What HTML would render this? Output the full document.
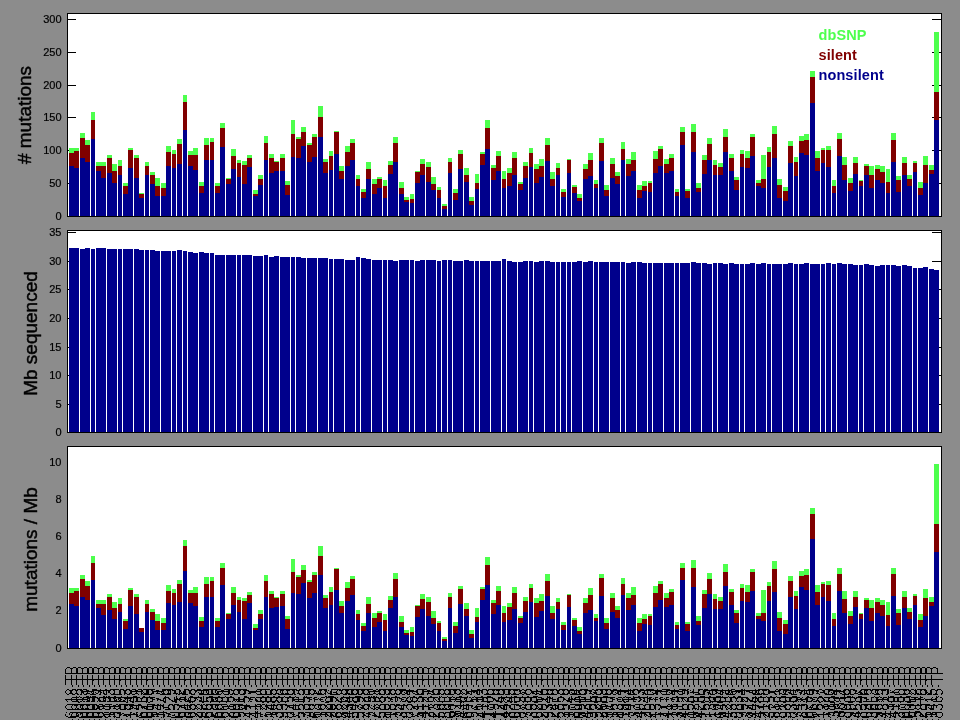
<!DOCTYPE html>
<html><head><meta charset="utf-8"><style>
html,body{margin:0;padding:0;background:#8c8c8c;width:960px;height:720px;overflow:hidden}
svg{display:block;will-change:transform}
.tk{font-family:"Liberation Sans",sans-serif;font-size:11px;fill:#000;stroke:#000;stroke-width:0.2px}
.yt{font-family:"Liberation Sans",sans-serif;font-size:19px;fill:#000;stroke:#000;stroke-width:0.45px}
.lg{font-family:"Liberation Sans",sans-serif;font-size:14.5px;font-weight:bold;letter-spacing:0.1px}
.xl{font-family:"Liberation Sans",sans-serif;font-size:16px;fill:#000}
</style></head><body>
<svg width="960" height="720" viewBox="0 0 960 720" shape-rendering="crispEdges">
<rect x="67" y="13" width="875" height="204" fill="#fff"/>
<rect x="67" y="230" width="875" height="203" fill="#fff"/>
<rect x="67" y="446" width="875" height="203" fill="#fff"/>
<rect x="67" y="19" width="9" height="1" fill="#000"/>
<rect x="932" y="19" width="9" height="1" fill="#000"/>
<rect x="67" y="52" width="9" height="1" fill="#000"/>
<rect x="932" y="52" width="9" height="1" fill="#000"/>
<rect x="67" y="85" width="9" height="1" fill="#000"/>
<rect x="932" y="85" width="9" height="1" fill="#000"/>
<rect x="67" y="117" width="9" height="1" fill="#000"/>
<rect x="932" y="117" width="9" height="1" fill="#000"/>
<rect x="67" y="150" width="9" height="1" fill="#000"/>
<rect x="932" y="150" width="9" height="1" fill="#000"/>
<rect x="67" y="183" width="9" height="1" fill="#000"/>
<rect x="932" y="183" width="9" height="1" fill="#000"/>
<rect x="67" y="216" width="9" height="1" fill="#000"/>
<rect x="932" y="216" width="9" height="1" fill="#000"/>
<rect x="67" y="232" width="9" height="1" fill="#000"/>
<rect x="932" y="232" width="9" height="1" fill="#000"/>
<rect x="67" y="261" width="9" height="1" fill="#000"/>
<rect x="932" y="261" width="9" height="1" fill="#000"/>
<rect x="67" y="289" width="9" height="1" fill="#000"/>
<rect x="932" y="289" width="9" height="1" fill="#000"/>
<rect x="67" y="318" width="9" height="1" fill="#000"/>
<rect x="932" y="318" width="9" height="1" fill="#000"/>
<rect x="67" y="347" width="9" height="1" fill="#000"/>
<rect x="932" y="347" width="9" height="1" fill="#000"/>
<rect x="67" y="375" width="9" height="1" fill="#000"/>
<rect x="932" y="375" width="9" height="1" fill="#000"/>
<rect x="67" y="404" width="9" height="1" fill="#000"/>
<rect x="932" y="404" width="9" height="1" fill="#000"/>
<rect x="67" y="432" width="9" height="1" fill="#000"/>
<rect x="932" y="432" width="9" height="1" fill="#000"/>
<rect x="69" y="148" width="5" height="5" fill="#4dff4d"/>
<rect x="69" y="153" width="5" height="13" fill="#800000"/>
<rect x="69" y="166" width="5" height="50" fill="#00008c"/>
<rect x="74" y="148" width="5" height="3" fill="#4dff4d"/>
<rect x="74" y="151" width="5" height="17" fill="#800000"/>
<rect x="74" y="168" width="5" height="48" fill="#00008c"/>
<rect x="80" y="133" width="5" height="5" fill="#4dff4d"/>
<rect x="80" y="138" width="5" height="20" fill="#800000"/>
<rect x="80" y="158" width="5" height="58" fill="#00008c"/>
<rect x="85" y="140" width="5" height="5" fill="#4dff4d"/>
<rect x="85" y="145" width="5" height="17" fill="#800000"/>
<rect x="85" y="162" width="5" height="54" fill="#00008c"/>
<rect x="91" y="112" width="4" height="8" fill="#4dff4d"/>
<rect x="91" y="120" width="4" height="19" fill="#800000"/>
<rect x="91" y="139" width="4" height="77" fill="#00008c"/>
<rect x="96" y="162" width="5" height="4" fill="#4dff4d"/>
<rect x="96" y="166" width="5" height="5" fill="#800000"/>
<rect x="96" y="171" width="5" height="45" fill="#00008c"/>
<rect x="101" y="162" width="5" height="4" fill="#4dff4d"/>
<rect x="101" y="166" width="5" height="12" fill="#800000"/>
<rect x="101" y="178" width="5" height="38" fill="#00008c"/>
<rect x="107" y="155" width="5" height="3" fill="#4dff4d"/>
<rect x="107" y="158" width="5" height="15" fill="#800000"/>
<rect x="107" y="173" width="5" height="43" fill="#00008c"/>
<rect x="112" y="164" width="5" height="7" fill="#4dff4d"/>
<rect x="112" y="171" width="5" height="12" fill="#800000"/>
<rect x="112" y="183" width="5" height="33" fill="#00008c"/>
<rect x="118" y="160" width="4" height="6" fill="#4dff4d"/>
<rect x="118" y="166" width="4" height="9" fill="#800000"/>
<rect x="118" y="175" width="4" height="41" fill="#00008c"/>
<rect x="123" y="183" width="5" height="3" fill="#4dff4d"/>
<rect x="123" y="186" width="5" height="8" fill="#800000"/>
<rect x="123" y="194" width="5" height="22" fill="#00008c"/>
<rect x="128" y="148" width="5" height="2" fill="#4dff4d"/>
<rect x="128" y="150" width="5" height="18" fill="#800000"/>
<rect x="128" y="168" width="5" height="48" fill="#00008c"/>
<rect x="134" y="155" width="5" height="3" fill="#4dff4d"/>
<rect x="134" y="158" width="5" height="20" fill="#800000"/>
<rect x="134" y="178" width="5" height="38" fill="#00008c"/>
<rect x="139" y="193" width="5" height="1" fill="#4dff4d"/>
<rect x="139" y="194" width="5" height="4" fill="#800000"/>
<rect x="139" y="198" width="5" height="18" fill="#00008c"/>
<rect x="145" y="162" width="4" height="4" fill="#4dff4d"/>
<rect x="145" y="166" width="4" height="9" fill="#800000"/>
<rect x="145" y="175" width="4" height="41" fill="#00008c"/>
<rect x="150" y="172" width="5" height="3" fill="#4dff4d"/>
<rect x="150" y="175" width="5" height="9" fill="#800000"/>
<rect x="150" y="184" width="5" height="32" fill="#00008c"/>
<rect x="155" y="178" width="5" height="8" fill="#4dff4d"/>
<rect x="155" y="186" width="5" height="10" fill="#800000"/>
<rect x="155" y="196" width="5" height="20" fill="#00008c"/>
<rect x="161" y="183" width="5" height="5" fill="#4dff4d"/>
<rect x="161" y="188" width="5" height="8" fill="#800000"/>
<rect x="161" y="196" width="5" height="20" fill="#00008c"/>
<rect x="166" y="146" width="5" height="6" fill="#4dff4d"/>
<rect x="166" y="152" width="5" height="14" fill="#800000"/>
<rect x="166" y="166" width="5" height="50" fill="#00008c"/>
<rect x="172" y="150" width="4" height="4" fill="#4dff4d"/>
<rect x="172" y="154" width="4" height="14" fill="#800000"/>
<rect x="172" y="168" width="4" height="48" fill="#00008c"/>
<rect x="177" y="139" width="5" height="5" fill="#4dff4d"/>
<rect x="177" y="144" width="5" height="20" fill="#800000"/>
<rect x="177" y="164" width="5" height="52" fill="#00008c"/>
<rect x="183" y="95" width="4" height="7" fill="#4dff4d"/>
<rect x="183" y="102" width="4" height="28" fill="#800000"/>
<rect x="183" y="130" width="4" height="86" fill="#00008c"/>
<rect x="188" y="151" width="5" height="4" fill="#4dff4d"/>
<rect x="188" y="155" width="5" height="11" fill="#800000"/>
<rect x="188" y="166" width="5" height="50" fill="#00008c"/>
<rect x="193" y="148" width="5" height="7" fill="#4dff4d"/>
<rect x="193" y="155" width="5" height="15" fill="#800000"/>
<rect x="193" y="170" width="5" height="46" fill="#00008c"/>
<rect x="199" y="182" width="5" height="4" fill="#4dff4d"/>
<rect x="199" y="186" width="5" height="7" fill="#800000"/>
<rect x="199" y="193" width="5" height="23" fill="#00008c"/>
<rect x="204" y="138" width="5" height="7" fill="#4dff4d"/>
<rect x="204" y="145" width="5" height="15" fill="#800000"/>
<rect x="204" y="160" width="5" height="56" fill="#00008c"/>
<rect x="210" y="138" width="4" height="4" fill="#4dff4d"/>
<rect x="210" y="142" width="4" height="18" fill="#800000"/>
<rect x="210" y="160" width="4" height="56" fill="#00008c"/>
<rect x="215" y="183" width="5" height="3" fill="#4dff4d"/>
<rect x="215" y="186" width="5" height="7" fill="#800000"/>
<rect x="215" y="193" width="5" height="23" fill="#00008c"/>
<rect x="220" y="123" width="5" height="5" fill="#4dff4d"/>
<rect x="220" y="128" width="5" height="19" fill="#800000"/>
<rect x="220" y="147" width="5" height="69" fill="#00008c"/>
<rect x="226" y="178" width="5" height="1" fill="#4dff4d"/>
<rect x="226" y="179" width="5" height="5" fill="#800000"/>
<rect x="226" y="184" width="5" height="32" fill="#00008c"/>
<rect x="231" y="149" width="5" height="7" fill="#4dff4d"/>
<rect x="231" y="156" width="5" height="13" fill="#800000"/>
<rect x="231" y="169" width="5" height="47" fill="#00008c"/>
<rect x="237" y="160" width="4" height="3" fill="#4dff4d"/>
<rect x="237" y="163" width="4" height="14" fill="#800000"/>
<rect x="237" y="177" width="4" height="39" fill="#00008c"/>
<rect x="242" y="161" width="5" height="4" fill="#4dff4d"/>
<rect x="242" y="165" width="5" height="19" fill="#800000"/>
<rect x="242" y="184" width="5" height="32" fill="#00008c"/>
<rect x="247" y="155" width="5" height="3" fill="#4dff4d"/>
<rect x="247" y="158" width="5" height="9" fill="#800000"/>
<rect x="247" y="167" width="5" height="49" fill="#00008c"/>
<rect x="253" y="190" width="5" height="4" fill="#4dff4d"/>
<rect x="253" y="194" width="5" height="2" fill="#800000"/>
<rect x="253" y="196" width="5" height="20" fill="#00008c"/>
<rect x="258" y="175" width="5" height="4" fill="#4dff4d"/>
<rect x="258" y="179" width="5" height="6" fill="#800000"/>
<rect x="258" y="185" width="5" height="31" fill="#00008c"/>
<rect x="264" y="136" width="4" height="7" fill="#4dff4d"/>
<rect x="264" y="143" width="4" height="17" fill="#800000"/>
<rect x="264" y="160" width="4" height="56" fill="#00008c"/>
<rect x="269" y="154" width="5" height="4" fill="#4dff4d"/>
<rect x="269" y="158" width="5" height="15" fill="#800000"/>
<rect x="269" y="173" width="5" height="43" fill="#00008c"/>
<rect x="274" y="161" width="5" height="1" fill="#4dff4d"/>
<rect x="274" y="162" width="5" height="9" fill="#800000"/>
<rect x="274" y="171" width="5" height="45" fill="#00008c"/>
<rect x="280" y="154" width="5" height="4" fill="#4dff4d"/>
<rect x="280" y="158" width="5" height="13" fill="#800000"/>
<rect x="280" y="171" width="5" height="45" fill="#00008c"/>
<rect x="285" y="181" width="5" height="4" fill="#4dff4d"/>
<rect x="285" y="185" width="5" height="10" fill="#800000"/>
<rect x="285" y="195" width="5" height="21" fill="#00008c"/>
<rect x="291" y="120" width="4" height="14" fill="#4dff4d"/>
<rect x="291" y="134" width="4" height="23" fill="#800000"/>
<rect x="291" y="157" width="4" height="59" fill="#00008c"/>
<rect x="296" y="137" width="5" height="2" fill="#4dff4d"/>
<rect x="296" y="139" width="5" height="19" fill="#800000"/>
<rect x="296" y="158" width="5" height="58" fill="#00008c"/>
<rect x="301" y="127" width="5" height="5" fill="#4dff4d"/>
<rect x="301" y="132" width="5" height="14" fill="#800000"/>
<rect x="301" y="146" width="5" height="70" fill="#00008c"/>
<rect x="307" y="143" width="5" height="2" fill="#4dff4d"/>
<rect x="307" y="145" width="5" height="17" fill="#800000"/>
<rect x="307" y="162" width="5" height="54" fill="#00008c"/>
<rect x="312" y="134" width="5" height="3" fill="#4dff4d"/>
<rect x="312" y="137" width="5" height="20" fill="#800000"/>
<rect x="312" y="157" width="5" height="59" fill="#00008c"/>
<rect x="318" y="106" width="5" height="11" fill="#4dff4d"/>
<rect x="318" y="117" width="5" height="20" fill="#800000"/>
<rect x="318" y="137" width="5" height="79" fill="#00008c"/>
<rect x="323" y="159" width="5" height="3" fill="#4dff4d"/>
<rect x="323" y="162" width="5" height="11" fill="#800000"/>
<rect x="323" y="173" width="5" height="43" fill="#00008c"/>
<rect x="329" y="151" width="4" height="5" fill="#4dff4d"/>
<rect x="329" y="156" width="4" height="14" fill="#800000"/>
<rect x="329" y="170" width="4" height="46" fill="#00008c"/>
<rect x="334" y="131" width="5" height="1" fill="#4dff4d"/>
<rect x="334" y="132" width="5" height="22" fill="#800000"/>
<rect x="334" y="154" width="5" height="62" fill="#00008c"/>
<rect x="339" y="166" width="5" height="5" fill="#4dff4d"/>
<rect x="339" y="171" width="5" height="8" fill="#800000"/>
<rect x="339" y="179" width="5" height="37" fill="#00008c"/>
<rect x="345" y="146" width="5" height="6" fill="#4dff4d"/>
<rect x="345" y="152" width="5" height="14" fill="#800000"/>
<rect x="345" y="166" width="5" height="50" fill="#00008c"/>
<rect x="350" y="139" width="5" height="4" fill="#4dff4d"/>
<rect x="350" y="143" width="5" height="17" fill="#800000"/>
<rect x="350" y="160" width="5" height="56" fill="#00008c"/>
<rect x="356" y="175" width="4" height="4" fill="#4dff4d"/>
<rect x="356" y="179" width="4" height="7" fill="#800000"/>
<rect x="356" y="186" width="4" height="30" fill="#00008c"/>
<rect x="361" y="189" width="5" height="3" fill="#4dff4d"/>
<rect x="361" y="192" width="5" height="6" fill="#800000"/>
<rect x="361" y="198" width="5" height="18" fill="#00008c"/>
<rect x="366" y="162" width="5" height="7" fill="#4dff4d"/>
<rect x="366" y="169" width="5" height="10" fill="#800000"/>
<rect x="366" y="179" width="5" height="37" fill="#00008c"/>
<rect x="372" y="179" width="5" height="5" fill="#4dff4d"/>
<rect x="372" y="184" width="5" height="10" fill="#800000"/>
<rect x="372" y="194" width="5" height="22" fill="#00008c"/>
<rect x="377" y="177" width="5" height="2" fill="#4dff4d"/>
<rect x="377" y="179" width="5" height="9" fill="#800000"/>
<rect x="377" y="188" width="5" height="28" fill="#00008c"/>
<rect x="383" y="180" width="4" height="6" fill="#4dff4d"/>
<rect x="383" y="186" width="4" height="12" fill="#800000"/>
<rect x="383" y="198" width="4" height="18" fill="#00008c"/>
<rect x="388" y="161" width="5" height="4" fill="#4dff4d"/>
<rect x="388" y="165" width="5" height="9" fill="#800000"/>
<rect x="388" y="174" width="5" height="42" fill="#00008c"/>
<rect x="393" y="137" width="5" height="6" fill="#4dff4d"/>
<rect x="393" y="143" width="5" height="19" fill="#800000"/>
<rect x="393" y="162" width="5" height="54" fill="#00008c"/>
<rect x="399" y="182" width="5" height="6" fill="#4dff4d"/>
<rect x="399" y="188" width="5" height="6" fill="#800000"/>
<rect x="399" y="194" width="5" height="22" fill="#00008c"/>
<rect x="404" y="197" width="5" height="3" fill="#4dff4d"/>
<rect x="404" y="200" width="5" height="2" fill="#800000"/>
<rect x="404" y="202" width="5" height="14" fill="#00008c"/>
<rect x="410" y="194" width="4" height="5" fill="#4dff4d"/>
<rect x="410" y="199" width="4" height="4" fill="#800000"/>
<rect x="410" y="203" width="4" height="13" fill="#00008c"/>
<rect x="415" y="171" width="5" height="1" fill="#4dff4d"/>
<rect x="415" y="172" width="5" height="11" fill="#800000"/>
<rect x="415" y="183" width="5" height="33" fill="#00008c"/>
<rect x="420" y="159" width="5" height="5" fill="#4dff4d"/>
<rect x="420" y="164" width="5" height="11" fill="#800000"/>
<rect x="420" y="175" width="5" height="41" fill="#00008c"/>
<rect x="426" y="162" width="5" height="5" fill="#4dff4d"/>
<rect x="426" y="167" width="5" height="15" fill="#800000"/>
<rect x="426" y="182" width="5" height="34" fill="#00008c"/>
<rect x="431" y="177" width="5" height="7" fill="#4dff4d"/>
<rect x="431" y="184" width="5" height="6" fill="#800000"/>
<rect x="431" y="190" width="5" height="26" fill="#00008c"/>
<rect x="437" y="187" width="4" height="3" fill="#4dff4d"/>
<rect x="437" y="190" width="4" height="8" fill="#800000"/>
<rect x="437" y="198" width="4" height="18" fill="#00008c"/>
<rect x="442" y="204" width="5" height="2" fill="#4dff4d"/>
<rect x="442" y="206" width="5" height="3" fill="#800000"/>
<rect x="442" y="209" width="5" height="7" fill="#00008c"/>
<rect x="448" y="158" width="4" height="4" fill="#4dff4d"/>
<rect x="448" y="162" width="4" height="11" fill="#800000"/>
<rect x="448" y="173" width="4" height="43" fill="#00008c"/>
<rect x="453" y="189" width="5" height="4" fill="#4dff4d"/>
<rect x="453" y="193" width="5" height="7" fill="#800000"/>
<rect x="453" y="200" width="5" height="16" fill="#00008c"/>
<rect x="458" y="150" width="5" height="4" fill="#4dff4d"/>
<rect x="458" y="154" width="5" height="15" fill="#800000"/>
<rect x="458" y="169" width="5" height="47" fill="#00008c"/>
<rect x="464" y="168" width="5" height="7" fill="#4dff4d"/>
<rect x="464" y="175" width="5" height="7" fill="#800000"/>
<rect x="464" y="182" width="5" height="34" fill="#00008c"/>
<rect x="469" y="197" width="5" height="4" fill="#4dff4d"/>
<rect x="469" y="201" width="5" height="4" fill="#800000"/>
<rect x="469" y="205" width="5" height="11" fill="#00008c"/>
<rect x="475" y="174" width="4" height="9" fill="#4dff4d"/>
<rect x="475" y="183" width="4" height="6" fill="#800000"/>
<rect x="475" y="189" width="4" height="27" fill="#00008c"/>
<rect x="480" y="152" width="5" height="2" fill="#4dff4d"/>
<rect x="480" y="154" width="5" height="11" fill="#800000"/>
<rect x="480" y="165" width="5" height="51" fill="#00008c"/>
<rect x="485" y="120" width="5" height="8" fill="#4dff4d"/>
<rect x="485" y="128" width="5" height="21" fill="#800000"/>
<rect x="485" y="149" width="5" height="67" fill="#00008c"/>
<rect x="491" y="165" width="5" height="3" fill="#4dff4d"/>
<rect x="491" y="168" width="5" height="12" fill="#800000"/>
<rect x="491" y="180" width="5" height="36" fill="#00008c"/>
<rect x="496" y="151" width="5" height="5" fill="#4dff4d"/>
<rect x="496" y="156" width="5" height="15" fill="#800000"/>
<rect x="496" y="171" width="5" height="45" fill="#00008c"/>
<rect x="502" y="171" width="4" height="8" fill="#4dff4d"/>
<rect x="502" y="179" width="4" height="9" fill="#800000"/>
<rect x="502" y="188" width="4" height="28" fill="#00008c"/>
<rect x="507" y="168" width="5" height="5" fill="#4dff4d"/>
<rect x="507" y="173" width="5" height="13" fill="#800000"/>
<rect x="507" y="186" width="5" height="30" fill="#00008c"/>
<rect x="512" y="152" width="5" height="6" fill="#4dff4d"/>
<rect x="512" y="158" width="5" height="17" fill="#800000"/>
<rect x="512" y="175" width="5" height="41" fill="#00008c"/>
<rect x="518" y="182" width="5" height="2" fill="#4dff4d"/>
<rect x="518" y="184" width="5" height="6" fill="#800000"/>
<rect x="518" y="190" width="5" height="26" fill="#00008c"/>
<rect x="523" y="162" width="5" height="4" fill="#4dff4d"/>
<rect x="523" y="166" width="5" height="12" fill="#800000"/>
<rect x="523" y="178" width="5" height="38" fill="#00008c"/>
<rect x="529" y="148" width="4" height="5" fill="#4dff4d"/>
<rect x="529" y="153" width="4" height="14" fill="#800000"/>
<rect x="529" y="167" width="4" height="49" fill="#00008c"/>
<rect x="534" y="164" width="5" height="5" fill="#4dff4d"/>
<rect x="534" y="169" width="5" height="14" fill="#800000"/>
<rect x="534" y="183" width="5" height="33" fill="#00008c"/>
<rect x="539" y="159" width="5" height="7" fill="#4dff4d"/>
<rect x="539" y="166" width="5" height="11" fill="#800000"/>
<rect x="539" y="177" width="5" height="39" fill="#00008c"/>
<rect x="545" y="138" width="5" height="7" fill="#4dff4d"/>
<rect x="545" y="145" width="5" height="16" fill="#800000"/>
<rect x="545" y="161" width="5" height="55" fill="#00008c"/>
<rect x="550" y="172" width="5" height="7" fill="#4dff4d"/>
<rect x="550" y="179" width="5" height="7" fill="#800000"/>
<rect x="550" y="186" width="5" height="30" fill="#00008c"/>
<rect x="556" y="163" width="4" height="5" fill="#4dff4d"/>
<rect x="556" y="168" width="4" height="7" fill="#800000"/>
<rect x="556" y="175" width="4" height="41" fill="#00008c"/>
<rect x="561" y="189" width="5" height="3" fill="#4dff4d"/>
<rect x="561" y="192" width="5" height="5" fill="#800000"/>
<rect x="561" y="197" width="5" height="19" fill="#00008c"/>
<rect x="567" y="159" width="4" height="1" fill="#4dff4d"/>
<rect x="567" y="160" width="4" height="13" fill="#800000"/>
<rect x="567" y="173" width="4" height="43" fill="#00008c"/>
<rect x="572" y="185" width="5" height="2" fill="#4dff4d"/>
<rect x="572" y="187" width="5" height="6" fill="#800000"/>
<rect x="572" y="193" width="5" height="23" fill="#00008c"/>
<rect x="577" y="194" width="5" height="4" fill="#4dff4d"/>
<rect x="577" y="198" width="5" height="3" fill="#800000"/>
<rect x="577" y="201" width="5" height="15" fill="#00008c"/>
<rect x="583" y="164" width="5" height="5" fill="#4dff4d"/>
<rect x="583" y="169" width="5" height="10" fill="#800000"/>
<rect x="583" y="179" width="5" height="37" fill="#00008c"/>
<rect x="588" y="153" width="5" height="7" fill="#4dff4d"/>
<rect x="588" y="160" width="5" height="16" fill="#800000"/>
<rect x="588" y="176" width="5" height="40" fill="#00008c"/>
<rect x="594" y="180" width="4" height="4" fill="#4dff4d"/>
<rect x="594" y="184" width="4" height="4" fill="#800000"/>
<rect x="594" y="188" width="4" height="28" fill="#00008c"/>
<rect x="599" y="138" width="5" height="5" fill="#4dff4d"/>
<rect x="599" y="143" width="5" height="18" fill="#800000"/>
<rect x="599" y="161" width="5" height="55" fill="#00008c"/>
<rect x="604" y="185" width="5" height="5" fill="#4dff4d"/>
<rect x="604" y="190" width="5" height="6" fill="#800000"/>
<rect x="604" y="196" width="5" height="20" fill="#00008c"/>
<rect x="610" y="158" width="5" height="6" fill="#4dff4d"/>
<rect x="610" y="164" width="5" height="14" fill="#800000"/>
<rect x="610" y="178" width="5" height="38" fill="#00008c"/>
<rect x="615" y="172" width="5" height="4" fill="#4dff4d"/>
<rect x="615" y="176" width="5" height="8" fill="#800000"/>
<rect x="615" y="184" width="5" height="32" fill="#00008c"/>
<rect x="621" y="142" width="4" height="7" fill="#4dff4d"/>
<rect x="621" y="149" width="4" height="11" fill="#800000"/>
<rect x="621" y="160" width="4" height="56" fill="#00008c"/>
<rect x="626" y="159" width="5" height="5" fill="#4dff4d"/>
<rect x="626" y="164" width="5" height="12" fill="#800000"/>
<rect x="626" y="176" width="5" height="40" fill="#00008c"/>
<rect x="631" y="152" width="5" height="8" fill="#4dff4d"/>
<rect x="631" y="160" width="5" height="11" fill="#800000"/>
<rect x="631" y="171" width="5" height="45" fill="#00008c"/>
<rect x="637" y="185" width="5" height="5" fill="#4dff4d"/>
<rect x="637" y="190" width="5" height="8" fill="#800000"/>
<rect x="637" y="198" width="5" height="18" fill="#00008c"/>
<rect x="642" y="181" width="5" height="5" fill="#4dff4d"/>
<rect x="642" y="186" width="5" height="5" fill="#800000"/>
<rect x="642" y="191" width="5" height="25" fill="#00008c"/>
<rect x="648" y="181" width="4" height="2" fill="#4dff4d"/>
<rect x="648" y="183" width="4" height="9" fill="#800000"/>
<rect x="648" y="192" width="4" height="24" fill="#00008c"/>
<rect x="653" y="151" width="5" height="8" fill="#4dff4d"/>
<rect x="653" y="159" width="5" height="14" fill="#800000"/>
<rect x="653" y="173" width="5" height="43" fill="#00008c"/>
<rect x="658" y="146" width="5" height="3" fill="#4dff4d"/>
<rect x="658" y="149" width="5" height="17" fill="#800000"/>
<rect x="658" y="166" width="5" height="50" fill="#00008c"/>
<rect x="664" y="159" width="5" height="5" fill="#4dff4d"/>
<rect x="664" y="164" width="5" height="9" fill="#800000"/>
<rect x="664" y="173" width="5" height="43" fill="#00008c"/>
<rect x="669" y="154" width="5" height="4" fill="#4dff4d"/>
<rect x="669" y="158" width="5" height="13" fill="#800000"/>
<rect x="669" y="171" width="5" height="45" fill="#00008c"/>
<rect x="675" y="189" width="4" height="3" fill="#4dff4d"/>
<rect x="675" y="192" width="4" height="4" fill="#800000"/>
<rect x="675" y="196" width="4" height="20" fill="#00008c"/>
<rect x="680" y="127" width="5" height="5" fill="#4dff4d"/>
<rect x="680" y="132" width="5" height="13" fill="#800000"/>
<rect x="680" y="145" width="5" height="71" fill="#00008c"/>
<rect x="685" y="189" width="5" height="2" fill="#4dff4d"/>
<rect x="685" y="191" width="5" height="7" fill="#800000"/>
<rect x="685" y="198" width="5" height="18" fill="#00008c"/>
<rect x="691" y="124" width="5" height="8" fill="#4dff4d"/>
<rect x="691" y="132" width="5" height="20" fill="#800000"/>
<rect x="691" y="152" width="5" height="64" fill="#00008c"/>
<rect x="696" y="183" width="5" height="5" fill="#4dff4d"/>
<rect x="696" y="188" width="5" height="4" fill="#800000"/>
<rect x="696" y="192" width="5" height="24" fill="#00008c"/>
<rect x="702" y="155" width="5" height="5" fill="#4dff4d"/>
<rect x="702" y="160" width="5" height="14" fill="#800000"/>
<rect x="702" y="174" width="5" height="42" fill="#00008c"/>
<rect x="707" y="138" width="5" height="6" fill="#4dff4d"/>
<rect x="707" y="144" width="5" height="16" fill="#800000"/>
<rect x="707" y="160" width="5" height="56" fill="#00008c"/>
<rect x="713" y="160" width="4" height="5" fill="#4dff4d"/>
<rect x="713" y="165" width="4" height="10" fill="#800000"/>
<rect x="713" y="175" width="4" height="41" fill="#00008c"/>
<rect x="718" y="163" width="5" height="4" fill="#4dff4d"/>
<rect x="718" y="167" width="5" height="8" fill="#800000"/>
<rect x="718" y="175" width="5" height="41" fill="#00008c"/>
<rect x="723" y="129" width="5" height="8" fill="#4dff4d"/>
<rect x="723" y="137" width="5" height="15" fill="#800000"/>
<rect x="723" y="152" width="5" height="64" fill="#00008c"/>
<rect x="729" y="154" width="5" height="4" fill="#4dff4d"/>
<rect x="729" y="158" width="5" height="13" fill="#800000"/>
<rect x="729" y="171" width="5" height="45" fill="#00008c"/>
<rect x="734" y="177" width="5" height="3" fill="#4dff4d"/>
<rect x="734" y="180" width="5" height="10" fill="#800000"/>
<rect x="734" y="190" width="5" height="26" fill="#00008c"/>
<rect x="740" y="150" width="4" height="4" fill="#4dff4d"/>
<rect x="740" y="154" width="4" height="13" fill="#800000"/>
<rect x="740" y="167" width="4" height="49" fill="#00008c"/>
<rect x="745" y="151" width="5" height="7" fill="#4dff4d"/>
<rect x="745" y="158" width="5" height="10" fill="#800000"/>
<rect x="745" y="168" width="5" height="48" fill="#00008c"/>
<rect x="750" y="134" width="5" height="3" fill="#4dff4d"/>
<rect x="750" y="137" width="5" height="19" fill="#800000"/>
<rect x="750" y="156" width="5" height="60" fill="#00008c"/>
<rect x="756" y="180" width="5" height="3" fill="#4dff4d"/>
<rect x="756" y="183" width="5" height="3" fill="#800000"/>
<rect x="756" y="186" width="5" height="30" fill="#00008c"/>
<rect x="761" y="155" width="5" height="24" fill="#4dff4d"/>
<rect x="761" y="179" width="5" height="9" fill="#800000"/>
<rect x="761" y="188" width="5" height="28" fill="#00008c"/>
<rect x="767" y="147" width="4" height="5" fill="#4dff4d"/>
<rect x="767" y="152" width="4" height="15" fill="#800000"/>
<rect x="767" y="167" width="4" height="49" fill="#00008c"/>
<rect x="772" y="126" width="5" height="8" fill="#4dff4d"/>
<rect x="772" y="134" width="5" height="24" fill="#800000"/>
<rect x="772" y="158" width="5" height="58" fill="#00008c"/>
<rect x="777" y="179" width="5" height="6" fill="#4dff4d"/>
<rect x="777" y="185" width="5" height="13" fill="#800000"/>
<rect x="777" y="198" width="5" height="18" fill="#00008c"/>
<rect x="783" y="187" width="5" height="4" fill="#4dff4d"/>
<rect x="783" y="191" width="5" height="10" fill="#800000"/>
<rect x="783" y="201" width="5" height="15" fill="#00008c"/>
<rect x="788" y="141" width="5" height="5" fill="#4dff4d"/>
<rect x="788" y="146" width="5" height="17" fill="#800000"/>
<rect x="788" y="163" width="5" height="53" fill="#00008c"/>
<rect x="794" y="157" width="4" height="5" fill="#4dff4d"/>
<rect x="794" y="162" width="4" height="14" fill="#800000"/>
<rect x="794" y="176" width="4" height="40" fill="#00008c"/>
<rect x="799" y="136" width="5" height="5" fill="#4dff4d"/>
<rect x="799" y="141" width="5" height="12" fill="#800000"/>
<rect x="799" y="153" width="5" height="63" fill="#00008c"/>
<rect x="804" y="134" width="5" height="6" fill="#4dff4d"/>
<rect x="804" y="140" width="5" height="15" fill="#800000"/>
<rect x="804" y="155" width="5" height="61" fill="#00008c"/>
<rect x="810" y="71" width="5" height="6" fill="#4dff4d"/>
<rect x="810" y="77" width="5" height="26" fill="#800000"/>
<rect x="810" y="103" width="5" height="113" fill="#00008c"/>
<rect x="815" y="151" width="5" height="7" fill="#4dff4d"/>
<rect x="815" y="158" width="5" height="13" fill="#800000"/>
<rect x="815" y="171" width="5" height="45" fill="#00008c"/>
<rect x="821" y="148" width="4" height="2" fill="#4dff4d"/>
<rect x="821" y="150" width="4" height="13" fill="#800000"/>
<rect x="821" y="163" width="4" height="53" fill="#00008c"/>
<rect x="826" y="146" width="5" height="4" fill="#4dff4d"/>
<rect x="826" y="150" width="5" height="17" fill="#800000"/>
<rect x="826" y="167" width="5" height="49" fill="#00008c"/>
<rect x="832" y="180" width="4" height="6" fill="#4dff4d"/>
<rect x="832" y="186" width="4" height="7" fill="#800000"/>
<rect x="832" y="193" width="4" height="23" fill="#00008c"/>
<rect x="837" y="133" width="5" height="6" fill="#4dff4d"/>
<rect x="837" y="139" width="5" height="17" fill="#800000"/>
<rect x="837" y="156" width="5" height="60" fill="#00008c"/>
<rect x="842" y="157" width="5" height="8" fill="#4dff4d"/>
<rect x="842" y="165" width="5" height="15" fill="#800000"/>
<rect x="842" y="180" width="5" height="36" fill="#00008c"/>
<rect x="848" y="178" width="5" height="5" fill="#4dff4d"/>
<rect x="848" y="183" width="5" height="8" fill="#800000"/>
<rect x="848" y="191" width="5" height="25" fill="#00008c"/>
<rect x="853" y="157" width="5" height="6" fill="#4dff4d"/>
<rect x="853" y="163" width="5" height="11" fill="#800000"/>
<rect x="853" y="174" width="5" height="42" fill="#00008c"/>
<rect x="859" y="180" width="4" height="1" fill="#4dff4d"/>
<rect x="859" y="181" width="4" height="5" fill="#800000"/>
<rect x="859" y="186" width="4" height="30" fill="#00008c"/>
<rect x="864" y="164" width="5" height="2" fill="#4dff4d"/>
<rect x="864" y="166" width="5" height="9" fill="#800000"/>
<rect x="864" y="175" width="5" height="41" fill="#00008c"/>
<rect x="869" y="166" width="5" height="9" fill="#4dff4d"/>
<rect x="869" y="175" width="5" height="13" fill="#800000"/>
<rect x="869" y="188" width="5" height="28" fill="#00008c"/>
<rect x="875" y="165" width="5" height="4" fill="#4dff4d"/>
<rect x="875" y="169" width="5" height="11" fill="#800000"/>
<rect x="875" y="180" width="5" height="36" fill="#00008c"/>
<rect x="880" y="166" width="5" height="6" fill="#4dff4d"/>
<rect x="880" y="172" width="5" height="11" fill="#800000"/>
<rect x="880" y="183" width="5" height="33" fill="#00008c"/>
<rect x="886" y="169" width="4" height="13" fill="#4dff4d"/>
<rect x="886" y="182" width="4" height="11" fill="#800000"/>
<rect x="886" y="193" width="4" height="23" fill="#00008c"/>
<rect x="891" y="133" width="5" height="7" fill="#4dff4d"/>
<rect x="891" y="140" width="5" height="22" fill="#800000"/>
<rect x="891" y="162" width="5" height="54" fill="#00008c"/>
<rect x="896" y="176" width="5" height="4" fill="#4dff4d"/>
<rect x="896" y="180" width="5" height="12" fill="#800000"/>
<rect x="896" y="192" width="5" height="24" fill="#00008c"/>
<rect x="902" y="157" width="5" height="6" fill="#4dff4d"/>
<rect x="902" y="163" width="5" height="12" fill="#800000"/>
<rect x="902" y="175" width="5" height="41" fill="#00008c"/>
<rect x="907" y="175" width="5" height="4" fill="#4dff4d"/>
<rect x="907" y="179" width="5" height="7" fill="#800000"/>
<rect x="907" y="186" width="5" height="30" fill="#00008c"/>
<rect x="913" y="161" width="4" height="2" fill="#4dff4d"/>
<rect x="913" y="163" width="4" height="9" fill="#800000"/>
<rect x="913" y="172" width="4" height="44" fill="#00008c"/>
<rect x="918" y="182" width="5" height="6" fill="#4dff4d"/>
<rect x="918" y="188" width="5" height="7" fill="#800000"/>
<rect x="918" y="195" width="5" height="21" fill="#00008c"/>
<rect x="923" y="156" width="5" height="9" fill="#4dff4d"/>
<rect x="923" y="165" width="5" height="18" fill="#800000"/>
<rect x="923" y="183" width="5" height="33" fill="#00008c"/>
<rect x="929" y="165" width="5" height="5" fill="#4dff4d"/>
<rect x="929" y="170" width="5" height="4" fill="#800000"/>
<rect x="929" y="174" width="5" height="42" fill="#00008c"/>
<rect x="934" y="32" width="5" height="60" fill="#4dff4d"/>
<rect x="934" y="92" width="5" height="28" fill="#800000"/>
<rect x="934" y="120" width="5" height="96" fill="#00008c"/>
<rect x="69" y="248" width="5" height="184" fill="#00008c"/>
<rect x="74" y="248" width="5" height="184" fill="#00008c"/>
<rect x="80" y="249" width="5" height="183" fill="#00008c"/>
<rect x="85" y="248" width="5" height="184" fill="#00008c"/>
<rect x="91" y="249" width="4" height="183" fill="#00008c"/>
<rect x="96" y="248" width="5" height="184" fill="#00008c"/>
<rect x="101" y="248" width="5" height="184" fill="#00008c"/>
<rect x="107" y="249" width="5" height="183" fill="#00008c"/>
<rect x="112" y="249" width="5" height="183" fill="#00008c"/>
<rect x="118" y="249" width="4" height="183" fill="#00008c"/>
<rect x="123" y="249" width="5" height="183" fill="#00008c"/>
<rect x="128" y="249" width="5" height="183" fill="#00008c"/>
<rect x="134" y="249" width="5" height="183" fill="#00008c"/>
<rect x="139" y="250" width="5" height="182" fill="#00008c"/>
<rect x="145" y="250" width="4" height="182" fill="#00008c"/>
<rect x="150" y="250" width="5" height="182" fill="#00008c"/>
<rect x="155" y="251" width="5" height="181" fill="#00008c"/>
<rect x="161" y="251" width="5" height="181" fill="#00008c"/>
<rect x="166" y="251" width="5" height="181" fill="#00008c"/>
<rect x="172" y="251" width="4" height="181" fill="#00008c"/>
<rect x="177" y="250" width="5" height="182" fill="#00008c"/>
<rect x="183" y="251" width="4" height="181" fill="#00008c"/>
<rect x="188" y="252" width="5" height="180" fill="#00008c"/>
<rect x="193" y="253" width="5" height="179" fill="#00008c"/>
<rect x="199" y="252" width="5" height="180" fill="#00008c"/>
<rect x="204" y="253" width="5" height="179" fill="#00008c"/>
<rect x="210" y="253" width="4" height="179" fill="#00008c"/>
<rect x="215" y="255" width="5" height="177" fill="#00008c"/>
<rect x="220" y="255" width="5" height="177" fill="#00008c"/>
<rect x="226" y="255" width="5" height="177" fill="#00008c"/>
<rect x="231" y="255" width="5" height="177" fill="#00008c"/>
<rect x="237" y="255" width="4" height="177" fill="#00008c"/>
<rect x="242" y="255" width="5" height="177" fill="#00008c"/>
<rect x="247" y="255" width="5" height="177" fill="#00008c"/>
<rect x="253" y="256" width="5" height="176" fill="#00008c"/>
<rect x="258" y="256" width="5" height="176" fill="#00008c"/>
<rect x="264" y="255" width="4" height="177" fill="#00008c"/>
<rect x="269" y="257" width="5" height="175" fill="#00008c"/>
<rect x="274" y="256" width="5" height="176" fill="#00008c"/>
<rect x="280" y="257" width="5" height="175" fill="#00008c"/>
<rect x="285" y="257" width="5" height="175" fill="#00008c"/>
<rect x="291" y="257" width="4" height="175" fill="#00008c"/>
<rect x="296" y="257" width="5" height="175" fill="#00008c"/>
<rect x="301" y="258" width="5" height="174" fill="#00008c"/>
<rect x="307" y="258" width="5" height="174" fill="#00008c"/>
<rect x="312" y="258" width="5" height="174" fill="#00008c"/>
<rect x="318" y="258" width="5" height="174" fill="#00008c"/>
<rect x="323" y="258" width="5" height="174" fill="#00008c"/>
<rect x="329" y="259" width="4" height="173" fill="#00008c"/>
<rect x="334" y="259" width="5" height="173" fill="#00008c"/>
<rect x="339" y="259" width="5" height="173" fill="#00008c"/>
<rect x="345" y="260" width="5" height="172" fill="#00008c"/>
<rect x="350" y="260" width="5" height="172" fill="#00008c"/>
<rect x="356" y="257" width="4" height="175" fill="#00008c"/>
<rect x="361" y="258" width="5" height="174" fill="#00008c"/>
<rect x="366" y="259" width="5" height="173" fill="#00008c"/>
<rect x="372" y="260" width="5" height="172" fill="#00008c"/>
<rect x="377" y="260" width="5" height="172" fill="#00008c"/>
<rect x="383" y="260" width="4" height="172" fill="#00008c"/>
<rect x="388" y="260" width="5" height="172" fill="#00008c"/>
<rect x="393" y="261" width="5" height="171" fill="#00008c"/>
<rect x="399" y="260" width="5" height="172" fill="#00008c"/>
<rect x="404" y="260" width="5" height="172" fill="#00008c"/>
<rect x="410" y="260" width="4" height="172" fill="#00008c"/>
<rect x="415" y="261" width="5" height="171" fill="#00008c"/>
<rect x="420" y="260" width="5" height="172" fill="#00008c"/>
<rect x="426" y="260" width="5" height="172" fill="#00008c"/>
<rect x="431" y="260" width="5" height="172" fill="#00008c"/>
<rect x="437" y="261" width="4" height="171" fill="#00008c"/>
<rect x="442" y="260" width="5" height="172" fill="#00008c"/>
<rect x="448" y="260" width="4" height="172" fill="#00008c"/>
<rect x="453" y="261" width="5" height="171" fill="#00008c"/>
<rect x="458" y="261" width="5" height="171" fill="#00008c"/>
<rect x="464" y="260" width="5" height="172" fill="#00008c"/>
<rect x="469" y="261" width="5" height="171" fill="#00008c"/>
<rect x="475" y="261" width="4" height="171" fill="#00008c"/>
<rect x="480" y="261" width="5" height="171" fill="#00008c"/>
<rect x="485" y="261" width="5" height="171" fill="#00008c"/>
<rect x="491" y="261" width="5" height="171" fill="#00008c"/>
<rect x="496" y="261" width="5" height="171" fill="#00008c"/>
<rect x="502" y="259" width="4" height="173" fill="#00008c"/>
<rect x="507" y="261" width="5" height="171" fill="#00008c"/>
<rect x="512" y="262" width="5" height="170" fill="#00008c"/>
<rect x="518" y="262" width="5" height="170" fill="#00008c"/>
<rect x="523" y="261" width="5" height="171" fill="#00008c"/>
<rect x="529" y="261" width="4" height="171" fill="#00008c"/>
<rect x="534" y="262" width="5" height="170" fill="#00008c"/>
<rect x="539" y="261" width="5" height="171" fill="#00008c"/>
<rect x="545" y="261" width="5" height="171" fill="#00008c"/>
<rect x="550" y="262" width="5" height="170" fill="#00008c"/>
<rect x="556" y="262" width="4" height="170" fill="#00008c"/>
<rect x="561" y="262" width="5" height="170" fill="#00008c"/>
<rect x="567" y="262" width="4" height="170" fill="#00008c"/>
<rect x="572" y="262" width="5" height="170" fill="#00008c"/>
<rect x="577" y="261" width="5" height="171" fill="#00008c"/>
<rect x="583" y="262" width="5" height="170" fill="#00008c"/>
<rect x="588" y="261" width="5" height="171" fill="#00008c"/>
<rect x="594" y="262" width="4" height="170" fill="#00008c"/>
<rect x="599" y="262" width="5" height="170" fill="#00008c"/>
<rect x="604" y="262" width="5" height="170" fill="#00008c"/>
<rect x="610" y="262" width="5" height="170" fill="#00008c"/>
<rect x="615" y="262" width="5" height="170" fill="#00008c"/>
<rect x="621" y="262" width="4" height="170" fill="#00008c"/>
<rect x="626" y="263" width="5" height="169" fill="#00008c"/>
<rect x="631" y="262" width="5" height="170" fill="#00008c"/>
<rect x="637" y="262" width="5" height="170" fill="#00008c"/>
<rect x="642" y="263" width="5" height="169" fill="#00008c"/>
<rect x="648" y="263" width="4" height="169" fill="#00008c"/>
<rect x="653" y="263" width="5" height="169" fill="#00008c"/>
<rect x="658" y="263" width="5" height="169" fill="#00008c"/>
<rect x="664" y="263" width="5" height="169" fill="#00008c"/>
<rect x="669" y="263" width="5" height="169" fill="#00008c"/>
<rect x="675" y="263" width="4" height="169" fill="#00008c"/>
<rect x="680" y="263" width="5" height="169" fill="#00008c"/>
<rect x="685" y="263" width="5" height="169" fill="#00008c"/>
<rect x="691" y="262" width="5" height="170" fill="#00008c"/>
<rect x="696" y="263" width="5" height="169" fill="#00008c"/>
<rect x="702" y="263" width="5" height="169" fill="#00008c"/>
<rect x="707" y="264" width="5" height="168" fill="#00008c"/>
<rect x="713" y="263" width="4" height="169" fill="#00008c"/>
<rect x="718" y="263" width="5" height="169" fill="#00008c"/>
<rect x="723" y="264" width="5" height="168" fill="#00008c"/>
<rect x="729" y="263" width="5" height="169" fill="#00008c"/>
<rect x="734" y="264" width="5" height="168" fill="#00008c"/>
<rect x="740" y="264" width="4" height="168" fill="#00008c"/>
<rect x="745" y="264" width="5" height="168" fill="#00008c"/>
<rect x="750" y="263" width="5" height="169" fill="#00008c"/>
<rect x="756" y="264" width="5" height="168" fill="#00008c"/>
<rect x="761" y="263" width="5" height="169" fill="#00008c"/>
<rect x="767" y="264" width="4" height="168" fill="#00008c"/>
<rect x="772" y="264" width="5" height="168" fill="#00008c"/>
<rect x="777" y="264" width="5" height="168" fill="#00008c"/>
<rect x="783" y="264" width="5" height="168" fill="#00008c"/>
<rect x="788" y="263" width="5" height="169" fill="#00008c"/>
<rect x="794" y="264" width="4" height="168" fill="#00008c"/>
<rect x="799" y="264" width="5" height="168" fill="#00008c"/>
<rect x="804" y="263" width="5" height="169" fill="#00008c"/>
<rect x="810" y="264" width="5" height="168" fill="#00008c"/>
<rect x="815" y="264" width="5" height="168" fill="#00008c"/>
<rect x="821" y="264" width="4" height="168" fill="#00008c"/>
<rect x="826" y="263" width="5" height="169" fill="#00008c"/>
<rect x="832" y="264" width="4" height="168" fill="#00008c"/>
<rect x="837" y="263" width="5" height="169" fill="#00008c"/>
<rect x="842" y="264" width="5" height="168" fill="#00008c"/>
<rect x="848" y="264" width="5" height="168" fill="#00008c"/>
<rect x="853" y="265" width="5" height="167" fill="#00008c"/>
<rect x="859" y="265" width="4" height="167" fill="#00008c"/>
<rect x="864" y="264" width="5" height="168" fill="#00008c"/>
<rect x="869" y="265" width="5" height="167" fill="#00008c"/>
<rect x="875" y="266" width="5" height="166" fill="#00008c"/>
<rect x="880" y="265" width="5" height="167" fill="#00008c"/>
<rect x="886" y="265" width="4" height="167" fill="#00008c"/>
<rect x="891" y="265" width="5" height="167" fill="#00008c"/>
<rect x="896" y="266" width="5" height="166" fill="#00008c"/>
<rect x="902" y="265" width="5" height="167" fill="#00008c"/>
<rect x="907" y="266" width="5" height="166" fill="#00008c"/>
<rect x="913" y="268" width="4" height="164" fill="#00008c"/>
<rect x="918" y="268" width="5" height="164" fill="#00008c"/>
<rect x="923" y="267" width="5" height="165" fill="#00008c"/>
<rect x="929" y="269" width="5" height="163" fill="#00008c"/>
<rect x="934" y="270" width="5" height="162" fill="#00008c"/>
<rect x="69" y="588" width="5" height="5" fill="#4dff4d"/>
<rect x="69" y="593" width="5" height="11" fill="#800000"/>
<rect x="69" y="604" width="5" height="44" fill="#00008c"/>
<rect x="74" y="588" width="5" height="3" fill="#4dff4d"/>
<rect x="74" y="591" width="5" height="15" fill="#800000"/>
<rect x="74" y="606" width="5" height="42" fill="#00008c"/>
<rect x="80" y="575" width="5" height="4" fill="#4dff4d"/>
<rect x="80" y="579" width="5" height="18" fill="#800000"/>
<rect x="80" y="597" width="5" height="51" fill="#00008c"/>
<rect x="85" y="581" width="5" height="5" fill="#4dff4d"/>
<rect x="85" y="586" width="5" height="14" fill="#800000"/>
<rect x="85" y="600" width="5" height="48" fill="#00008c"/>
<rect x="91" y="556" width="4" height="7" fill="#4dff4d"/>
<rect x="91" y="563" width="4" height="17" fill="#800000"/>
<rect x="91" y="580" width="4" height="68" fill="#00008c"/>
<rect x="96" y="600" width="5" height="4" fill="#4dff4d"/>
<rect x="96" y="604" width="5" height="4" fill="#800000"/>
<rect x="96" y="608" width="5" height="40" fill="#00008c"/>
<rect x="101" y="600" width="5" height="4" fill="#4dff4d"/>
<rect x="101" y="604" width="5" height="11" fill="#800000"/>
<rect x="101" y="615" width="5" height="33" fill="#00008c"/>
<rect x="107" y="594" width="5" height="3" fill="#4dff4d"/>
<rect x="107" y="597" width="5" height="13" fill="#800000"/>
<rect x="107" y="610" width="5" height="38" fill="#00008c"/>
<rect x="112" y="602" width="5" height="6" fill="#4dff4d"/>
<rect x="112" y="608" width="5" height="11" fill="#800000"/>
<rect x="112" y="619" width="5" height="29" fill="#00008c"/>
<rect x="118" y="598" width="4" height="6" fill="#4dff4d"/>
<rect x="118" y="604" width="4" height="8" fill="#800000"/>
<rect x="118" y="612" width="4" height="36" fill="#00008c"/>
<rect x="123" y="619" width="5" height="2" fill="#4dff4d"/>
<rect x="123" y="621" width="5" height="8" fill="#800000"/>
<rect x="123" y="629" width="5" height="19" fill="#00008c"/>
<rect x="128" y="588" width="5" height="2" fill="#4dff4d"/>
<rect x="128" y="590" width="5" height="16" fill="#800000"/>
<rect x="128" y="606" width="5" height="42" fill="#00008c"/>
<rect x="134" y="594" width="5" height="3" fill="#4dff4d"/>
<rect x="134" y="597" width="5" height="17" fill="#800000"/>
<rect x="134" y="614" width="5" height="34" fill="#00008c"/>
<rect x="139" y="628" width="5" height="4" fill="#800000"/>
<rect x="139" y="632" width="5" height="16" fill="#00008c"/>
<rect x="145" y="600" width="4" height="4" fill="#4dff4d"/>
<rect x="145" y="604" width="4" height="8" fill="#800000"/>
<rect x="145" y="612" width="4" height="36" fill="#00008c"/>
<rect x="150" y="609" width="5" height="3" fill="#4dff4d"/>
<rect x="150" y="612" width="5" height="8" fill="#800000"/>
<rect x="150" y="620" width="5" height="28" fill="#00008c"/>
<rect x="155" y="614" width="5" height="7" fill="#4dff4d"/>
<rect x="155" y="621" width="5" height="9" fill="#800000"/>
<rect x="155" y="630" width="5" height="18" fill="#00008c"/>
<rect x="161" y="618" width="5" height="5" fill="#4dff4d"/>
<rect x="161" y="623" width="5" height="7" fill="#800000"/>
<rect x="161" y="630" width="5" height="18" fill="#00008c"/>
<rect x="166" y="585" width="5" height="6" fill="#4dff4d"/>
<rect x="166" y="591" width="5" height="12" fill="#800000"/>
<rect x="166" y="603" width="5" height="45" fill="#00008c"/>
<rect x="172" y="589" width="4" height="4" fill="#4dff4d"/>
<rect x="172" y="593" width="4" height="12" fill="#800000"/>
<rect x="172" y="605" width="4" height="43" fill="#00008c"/>
<rect x="177" y="580" width="5" height="4" fill="#4dff4d"/>
<rect x="177" y="584" width="5" height="18" fill="#800000"/>
<rect x="177" y="602" width="5" height="46" fill="#00008c"/>
<rect x="183" y="540" width="4" height="6" fill="#4dff4d"/>
<rect x="183" y="546" width="4" height="25" fill="#800000"/>
<rect x="183" y="571" width="4" height="77" fill="#00008c"/>
<rect x="188" y="590" width="5" height="3" fill="#4dff4d"/>
<rect x="188" y="593" width="5" height="10" fill="#800000"/>
<rect x="188" y="603" width="5" height="45" fill="#00008c"/>
<rect x="193" y="587" width="5" height="6" fill="#4dff4d"/>
<rect x="193" y="593" width="5" height="13" fill="#800000"/>
<rect x="193" y="606" width="5" height="42" fill="#00008c"/>
<rect x="199" y="617" width="5" height="4" fill="#4dff4d"/>
<rect x="199" y="621" width="5" height="6" fill="#800000"/>
<rect x="199" y="627" width="5" height="21" fill="#00008c"/>
<rect x="204" y="577" width="5" height="7" fill="#4dff4d"/>
<rect x="204" y="584" width="5" height="13" fill="#800000"/>
<rect x="204" y="597" width="5" height="51" fill="#00008c"/>
<rect x="210" y="577" width="4" height="4" fill="#4dff4d"/>
<rect x="210" y="581" width="4" height="16" fill="#800000"/>
<rect x="210" y="597" width="4" height="51" fill="#00008c"/>
<rect x="215" y="618" width="5" height="3" fill="#4dff4d"/>
<rect x="215" y="621" width="5" height="6" fill="#800000"/>
<rect x="215" y="627" width="5" height="21" fill="#00008c"/>
<rect x="220" y="563" width="5" height="5" fill="#4dff4d"/>
<rect x="220" y="568" width="5" height="17" fill="#800000"/>
<rect x="220" y="585" width="5" height="63" fill="#00008c"/>
<rect x="226" y="613" width="5" height="1" fill="#4dff4d"/>
<rect x="226" y="614" width="5" height="5" fill="#800000"/>
<rect x="226" y="619" width="5" height="29" fill="#00008c"/>
<rect x="231" y="587" width="5" height="6" fill="#4dff4d"/>
<rect x="231" y="593" width="5" height="12" fill="#800000"/>
<rect x="231" y="605" width="5" height="43" fill="#00008c"/>
<rect x="237" y="597" width="4" height="3" fill="#4dff4d"/>
<rect x="237" y="600" width="4" height="12" fill="#800000"/>
<rect x="237" y="612" width="4" height="36" fill="#00008c"/>
<rect x="242" y="598" width="5" height="3" fill="#4dff4d"/>
<rect x="242" y="601" width="5" height="18" fill="#800000"/>
<rect x="242" y="619" width="5" height="29" fill="#00008c"/>
<rect x="247" y="592" width="5" height="3" fill="#4dff4d"/>
<rect x="247" y="595" width="5" height="8" fill="#800000"/>
<rect x="247" y="603" width="5" height="45" fill="#00008c"/>
<rect x="253" y="624" width="5" height="4" fill="#4dff4d"/>
<rect x="253" y="628" width="5" height="2" fill="#800000"/>
<rect x="253" y="630" width="5" height="18" fill="#00008c"/>
<rect x="258" y="610" width="5" height="4" fill="#4dff4d"/>
<rect x="258" y="614" width="5" height="5" fill="#800000"/>
<rect x="258" y="619" width="5" height="29" fill="#00008c"/>
<rect x="264" y="575" width="4" height="6" fill="#4dff4d"/>
<rect x="264" y="581" width="4" height="16" fill="#800000"/>
<rect x="264" y="597" width="4" height="51" fill="#00008c"/>
<rect x="269" y="591" width="5" height="3" fill="#4dff4d"/>
<rect x="269" y="594" width="5" height="14" fill="#800000"/>
<rect x="269" y="608" width="5" height="40" fill="#00008c"/>
<rect x="274" y="597" width="5" height="1" fill="#4dff4d"/>
<rect x="274" y="598" width="5" height="9" fill="#800000"/>
<rect x="274" y="607" width="5" height="41" fill="#00008c"/>
<rect x="280" y="591" width="5" height="3" fill="#4dff4d"/>
<rect x="280" y="594" width="5" height="12" fill="#800000"/>
<rect x="280" y="606" width="5" height="42" fill="#00008c"/>
<rect x="285" y="616" width="5" height="3" fill="#4dff4d"/>
<rect x="285" y="619" width="5" height="10" fill="#800000"/>
<rect x="285" y="629" width="5" height="19" fill="#00008c"/>
<rect x="291" y="559" width="4" height="13" fill="#4dff4d"/>
<rect x="291" y="572" width="4" height="21" fill="#800000"/>
<rect x="291" y="593" width="4" height="55" fill="#00008c"/>
<rect x="296" y="575" width="5" height="2" fill="#4dff4d"/>
<rect x="296" y="577" width="5" height="17" fill="#800000"/>
<rect x="296" y="594" width="5" height="54" fill="#00008c"/>
<rect x="301" y="565" width="5" height="5" fill="#4dff4d"/>
<rect x="301" y="570" width="5" height="13" fill="#800000"/>
<rect x="301" y="583" width="5" height="65" fill="#00008c"/>
<rect x="307" y="580" width="5" height="2" fill="#4dff4d"/>
<rect x="307" y="582" width="5" height="16" fill="#800000"/>
<rect x="307" y="598" width="5" height="50" fill="#00008c"/>
<rect x="312" y="572" width="5" height="3" fill="#4dff4d"/>
<rect x="312" y="575" width="5" height="18" fill="#800000"/>
<rect x="312" y="593" width="5" height="55" fill="#00008c"/>
<rect x="318" y="546" width="5" height="10" fill="#4dff4d"/>
<rect x="318" y="556" width="5" height="19" fill="#800000"/>
<rect x="318" y="575" width="5" height="73" fill="#00008c"/>
<rect x="323" y="595" width="5" height="3" fill="#4dff4d"/>
<rect x="323" y="598" width="5" height="10" fill="#800000"/>
<rect x="323" y="608" width="5" height="40" fill="#00008c"/>
<rect x="329" y="587" width="4" height="5" fill="#4dff4d"/>
<rect x="329" y="592" width="4" height="13" fill="#800000"/>
<rect x="329" y="605" width="4" height="43" fill="#00008c"/>
<rect x="334" y="568" width="5" height="1" fill="#4dff4d"/>
<rect x="334" y="569" width="5" height="21" fill="#800000"/>
<rect x="334" y="590" width="5" height="58" fill="#00008c"/>
<rect x="339" y="601" width="5" height="5" fill="#4dff4d"/>
<rect x="339" y="606" width="5" height="7" fill="#800000"/>
<rect x="339" y="613" width="5" height="35" fill="#00008c"/>
<rect x="345" y="582" width="5" height="6" fill="#4dff4d"/>
<rect x="345" y="588" width="5" height="13" fill="#800000"/>
<rect x="345" y="601" width="5" height="47" fill="#00008c"/>
<rect x="350" y="576" width="5" height="3" fill="#4dff4d"/>
<rect x="350" y="579" width="5" height="16" fill="#800000"/>
<rect x="350" y="595" width="5" height="53" fill="#00008c"/>
<rect x="356" y="610" width="4" height="4" fill="#4dff4d"/>
<rect x="356" y="614" width="4" height="6" fill="#800000"/>
<rect x="356" y="620" width="4" height="28" fill="#00008c"/>
<rect x="361" y="623" width="5" height="3" fill="#4dff4d"/>
<rect x="361" y="626" width="5" height="5" fill="#800000"/>
<rect x="361" y="631" width="5" height="17" fill="#00008c"/>
<rect x="366" y="597" width="5" height="7" fill="#4dff4d"/>
<rect x="366" y="604" width="5" height="9" fill="#800000"/>
<rect x="366" y="613" width="5" height="35" fill="#00008c"/>
<rect x="372" y="613" width="5" height="5" fill="#4dff4d"/>
<rect x="372" y="618" width="5" height="9" fill="#800000"/>
<rect x="372" y="627" width="5" height="21" fill="#00008c"/>
<rect x="377" y="611" width="5" height="2" fill="#4dff4d"/>
<rect x="377" y="613" width="5" height="9" fill="#800000"/>
<rect x="377" y="622" width="5" height="26" fill="#00008c"/>
<rect x="383" y="614" width="4" height="6" fill="#4dff4d"/>
<rect x="383" y="620" width="4" height="11" fill="#800000"/>
<rect x="383" y="631" width="4" height="17" fill="#00008c"/>
<rect x="388" y="596" width="5" height="4" fill="#4dff4d"/>
<rect x="388" y="600" width="5" height="8" fill="#800000"/>
<rect x="388" y="608" width="5" height="40" fill="#00008c"/>
<rect x="393" y="573" width="5" height="6" fill="#4dff4d"/>
<rect x="393" y="579" width="5" height="18" fill="#800000"/>
<rect x="393" y="597" width="5" height="51" fill="#00008c"/>
<rect x="399" y="616" width="5" height="6" fill="#4dff4d"/>
<rect x="399" y="622" width="5" height="5" fill="#800000"/>
<rect x="399" y="627" width="5" height="21" fill="#00008c"/>
<rect x="404" y="630" width="5" height="3" fill="#4dff4d"/>
<rect x="404" y="633" width="5" height="2" fill="#800000"/>
<rect x="404" y="635" width="5" height="13" fill="#00008c"/>
<rect x="410" y="627" width="4" height="5" fill="#4dff4d"/>
<rect x="410" y="632" width="4" height="4" fill="#800000"/>
<rect x="410" y="636" width="4" height="12" fill="#00008c"/>
<rect x="415" y="605" width="5" height="1" fill="#4dff4d"/>
<rect x="415" y="606" width="5" height="11" fill="#800000"/>
<rect x="415" y="617" width="5" height="31" fill="#00008c"/>
<rect x="420" y="594" width="5" height="5" fill="#4dff4d"/>
<rect x="420" y="599" width="5" height="10" fill="#800000"/>
<rect x="420" y="609" width="5" height="39" fill="#00008c"/>
<rect x="426" y="597" width="5" height="5" fill="#4dff4d"/>
<rect x="426" y="602" width="5" height="14" fill="#800000"/>
<rect x="426" y="616" width="5" height="32" fill="#00008c"/>
<rect x="431" y="611" width="5" height="7" fill="#4dff4d"/>
<rect x="431" y="618" width="5" height="6" fill="#800000"/>
<rect x="431" y="624" width="5" height="24" fill="#00008c"/>
<rect x="437" y="621" width="4" height="2" fill="#4dff4d"/>
<rect x="437" y="623" width="4" height="8" fill="#800000"/>
<rect x="437" y="631" width="4" height="17" fill="#00008c"/>
<rect x="442" y="637" width="5" height="2" fill="#4dff4d"/>
<rect x="442" y="639" width="5" height="2" fill="#800000"/>
<rect x="442" y="641" width="5" height="7" fill="#00008c"/>
<rect x="448" y="593" width="4" height="4" fill="#4dff4d"/>
<rect x="448" y="597" width="4" height="11" fill="#800000"/>
<rect x="448" y="608" width="4" height="40" fill="#00008c"/>
<rect x="453" y="622" width="5" height="4" fill="#4dff4d"/>
<rect x="453" y="626" width="5" height="7" fill="#800000"/>
<rect x="453" y="633" width="5" height="15" fill="#00008c"/>
<rect x="458" y="586" width="5" height="3" fill="#4dff4d"/>
<rect x="458" y="589" width="5" height="15" fill="#800000"/>
<rect x="458" y="604" width="5" height="44" fill="#00008c"/>
<rect x="464" y="603" width="5" height="6" fill="#4dff4d"/>
<rect x="464" y="609" width="5" height="7" fill="#800000"/>
<rect x="464" y="616" width="5" height="32" fill="#00008c"/>
<rect x="469" y="630" width="5" height="4" fill="#4dff4d"/>
<rect x="469" y="634" width="5" height="4" fill="#800000"/>
<rect x="469" y="638" width="5" height="10" fill="#00008c"/>
<rect x="475" y="608" width="4" height="9" fill="#4dff4d"/>
<rect x="475" y="617" width="4" height="5" fill="#800000"/>
<rect x="475" y="622" width="4" height="26" fill="#00008c"/>
<rect x="480" y="587" width="5" height="2" fill="#4dff4d"/>
<rect x="480" y="589" width="5" height="11" fill="#800000"/>
<rect x="480" y="600" width="5" height="48" fill="#00008c"/>
<rect x="485" y="557" width="5" height="8" fill="#4dff4d"/>
<rect x="485" y="565" width="5" height="20" fill="#800000"/>
<rect x="485" y="585" width="5" height="63" fill="#00008c"/>
<rect x="491" y="600" width="5" height="3" fill="#4dff4d"/>
<rect x="491" y="603" width="5" height="11" fill="#800000"/>
<rect x="491" y="614" width="5" height="34" fill="#00008c"/>
<rect x="496" y="586" width="5" height="5" fill="#4dff4d"/>
<rect x="496" y="591" width="5" height="14" fill="#800000"/>
<rect x="496" y="605" width="5" height="43" fill="#00008c"/>
<rect x="502" y="606" width="4" height="7" fill="#4dff4d"/>
<rect x="502" y="613" width="4" height="9" fill="#800000"/>
<rect x="502" y="622" width="4" height="26" fill="#00008c"/>
<rect x="507" y="603" width="5" height="4" fill="#4dff4d"/>
<rect x="507" y="607" width="5" height="13" fill="#800000"/>
<rect x="507" y="620" width="5" height="28" fill="#00008c"/>
<rect x="512" y="587" width="5" height="6" fill="#4dff4d"/>
<rect x="512" y="593" width="5" height="16" fill="#800000"/>
<rect x="512" y="609" width="5" height="39" fill="#00008c"/>
<rect x="518" y="616" width="5" height="2" fill="#4dff4d"/>
<rect x="518" y="618" width="5" height="5" fill="#800000"/>
<rect x="518" y="623" width="5" height="25" fill="#00008c"/>
<rect x="523" y="597" width="5" height="4" fill="#4dff4d"/>
<rect x="523" y="601" width="5" height="11" fill="#800000"/>
<rect x="523" y="612" width="5" height="36" fill="#00008c"/>
<rect x="529" y="584" width="4" height="4" fill="#4dff4d"/>
<rect x="529" y="588" width="4" height="14" fill="#800000"/>
<rect x="529" y="602" width="4" height="46" fill="#00008c"/>
<rect x="534" y="598" width="5" height="5" fill="#4dff4d"/>
<rect x="534" y="603" width="5" height="14" fill="#800000"/>
<rect x="534" y="617" width="5" height="31" fill="#00008c"/>
<rect x="539" y="594" width="5" height="7" fill="#4dff4d"/>
<rect x="539" y="601" width="5" height="10" fill="#800000"/>
<rect x="539" y="611" width="5" height="37" fill="#00008c"/>
<rect x="545" y="574" width="5" height="7" fill="#4dff4d"/>
<rect x="545" y="581" width="5" height="15" fill="#800000"/>
<rect x="545" y="596" width="5" height="52" fill="#00008c"/>
<rect x="550" y="606" width="5" height="7" fill="#4dff4d"/>
<rect x="550" y="613" width="5" height="6" fill="#800000"/>
<rect x="550" y="619" width="5" height="29" fill="#00008c"/>
<rect x="556" y="598" width="4" height="4" fill="#4dff4d"/>
<rect x="556" y="602" width="4" height="7" fill="#800000"/>
<rect x="556" y="609" width="4" height="39" fill="#00008c"/>
<rect x="561" y="622" width="5" height="3" fill="#4dff4d"/>
<rect x="561" y="625" width="5" height="5" fill="#800000"/>
<rect x="561" y="630" width="5" height="18" fill="#00008c"/>
<rect x="567" y="594" width="4" height="1" fill="#4dff4d"/>
<rect x="567" y="595" width="4" height="12" fill="#800000"/>
<rect x="567" y="607" width="4" height="41" fill="#00008c"/>
<rect x="572" y="618" width="5" height="2" fill="#4dff4d"/>
<rect x="572" y="620" width="5" height="6" fill="#800000"/>
<rect x="572" y="626" width="5" height="22" fill="#00008c"/>
<rect x="577" y="627" width="5" height="4" fill="#4dff4d"/>
<rect x="577" y="631" width="5" height="3" fill="#800000"/>
<rect x="577" y="634" width="5" height="14" fill="#00008c"/>
<rect x="583" y="598" width="5" height="5" fill="#4dff4d"/>
<rect x="583" y="603" width="5" height="10" fill="#800000"/>
<rect x="583" y="613" width="5" height="35" fill="#00008c"/>
<rect x="588" y="588" width="5" height="7" fill="#4dff4d"/>
<rect x="588" y="595" width="5" height="15" fill="#800000"/>
<rect x="588" y="610" width="5" height="38" fill="#00008c"/>
<rect x="594" y="614" width="4" height="4" fill="#4dff4d"/>
<rect x="594" y="618" width="4" height="3" fill="#800000"/>
<rect x="594" y="621" width="4" height="27" fill="#00008c"/>
<rect x="599" y="574" width="5" height="4" fill="#4dff4d"/>
<rect x="599" y="578" width="5" height="18" fill="#800000"/>
<rect x="599" y="596" width="5" height="52" fill="#00008c"/>
<rect x="604" y="618" width="5" height="5" fill="#4dff4d"/>
<rect x="604" y="623" width="5" height="6" fill="#800000"/>
<rect x="604" y="629" width="5" height="19" fill="#00008c"/>
<rect x="610" y="593" width="5" height="5" fill="#4dff4d"/>
<rect x="610" y="598" width="5" height="14" fill="#800000"/>
<rect x="610" y="612" width="5" height="36" fill="#00008c"/>
<rect x="615" y="606" width="5" height="4" fill="#4dff4d"/>
<rect x="615" y="610" width="5" height="8" fill="#800000"/>
<rect x="615" y="618" width="5" height="30" fill="#00008c"/>
<rect x="621" y="578" width="4" height="6" fill="#4dff4d"/>
<rect x="621" y="584" width="4" height="11" fill="#800000"/>
<rect x="621" y="595" width="4" height="53" fill="#00008c"/>
<rect x="626" y="593" width="5" height="5" fill="#4dff4d"/>
<rect x="626" y="598" width="5" height="12" fill="#800000"/>
<rect x="626" y="610" width="5" height="38" fill="#00008c"/>
<rect x="631" y="587" width="5" height="8" fill="#4dff4d"/>
<rect x="631" y="595" width="5" height="10" fill="#800000"/>
<rect x="631" y="605" width="5" height="43" fill="#00008c"/>
<rect x="637" y="618" width="5" height="5" fill="#4dff4d"/>
<rect x="637" y="623" width="5" height="8" fill="#800000"/>
<rect x="637" y="631" width="5" height="17" fill="#00008c"/>
<rect x="642" y="614" width="5" height="5" fill="#4dff4d"/>
<rect x="642" y="619" width="5" height="5" fill="#800000"/>
<rect x="642" y="624" width="5" height="24" fill="#00008c"/>
<rect x="648" y="614" width="4" height="2" fill="#4dff4d"/>
<rect x="648" y="616" width="4" height="9" fill="#800000"/>
<rect x="648" y="625" width="4" height="23" fill="#00008c"/>
<rect x="653" y="586" width="5" height="7" fill="#4dff4d"/>
<rect x="653" y="593" width="5" height="14" fill="#800000"/>
<rect x="653" y="607" width="5" height="41" fill="#00008c"/>
<rect x="658" y="581" width="5" height="3" fill="#4dff4d"/>
<rect x="658" y="584" width="5" height="16" fill="#800000"/>
<rect x="658" y="600" width="5" height="48" fill="#00008c"/>
<rect x="664" y="593" width="5" height="5" fill="#4dff4d"/>
<rect x="664" y="598" width="5" height="9" fill="#800000"/>
<rect x="664" y="607" width="5" height="41" fill="#00008c"/>
<rect x="669" y="589" width="5" height="3" fill="#4dff4d"/>
<rect x="669" y="592" width="5" height="13" fill="#800000"/>
<rect x="669" y="605" width="5" height="43" fill="#00008c"/>
<rect x="675" y="622" width="4" height="3" fill="#4dff4d"/>
<rect x="675" y="625" width="4" height="4" fill="#800000"/>
<rect x="675" y="629" width="4" height="19" fill="#00008c"/>
<rect x="680" y="563" width="5" height="5" fill="#4dff4d"/>
<rect x="680" y="568" width="5" height="12" fill="#800000"/>
<rect x="680" y="580" width="5" height="68" fill="#00008c"/>
<rect x="685" y="622" width="5" height="2" fill="#4dff4d"/>
<rect x="685" y="624" width="5" height="7" fill="#800000"/>
<rect x="685" y="631" width="5" height="17" fill="#00008c"/>
<rect x="691" y="560" width="5" height="8" fill="#4dff4d"/>
<rect x="691" y="568" width="5" height="19" fill="#800000"/>
<rect x="691" y="587" width="5" height="61" fill="#00008c"/>
<rect x="696" y="616" width="5" height="5" fill="#4dff4d"/>
<rect x="696" y="621" width="5" height="4" fill="#800000"/>
<rect x="696" y="625" width="5" height="23" fill="#00008c"/>
<rect x="702" y="590" width="5" height="4" fill="#4dff4d"/>
<rect x="702" y="594" width="5" height="14" fill="#800000"/>
<rect x="702" y="608" width="5" height="40" fill="#00008c"/>
<rect x="707" y="573" width="5" height="6" fill="#4dff4d"/>
<rect x="707" y="579" width="5" height="15" fill="#800000"/>
<rect x="707" y="594" width="5" height="54" fill="#00008c"/>
<rect x="713" y="594" width="4" height="5" fill="#4dff4d"/>
<rect x="713" y="599" width="4" height="10" fill="#800000"/>
<rect x="713" y="609" width="4" height="39" fill="#00008c"/>
<rect x="718" y="597" width="5" height="4" fill="#4dff4d"/>
<rect x="718" y="601" width="5" height="8" fill="#800000"/>
<rect x="718" y="609" width="5" height="39" fill="#00008c"/>
<rect x="723" y="564" width="5" height="8" fill="#4dff4d"/>
<rect x="723" y="572" width="5" height="14" fill="#800000"/>
<rect x="723" y="586" width="5" height="62" fill="#00008c"/>
<rect x="729" y="589" width="5" height="3" fill="#4dff4d"/>
<rect x="729" y="592" width="5" height="13" fill="#800000"/>
<rect x="729" y="605" width="5" height="43" fill="#00008c"/>
<rect x="734" y="610" width="5" height="3" fill="#4dff4d"/>
<rect x="734" y="613" width="5" height="10" fill="#800000"/>
<rect x="734" y="623" width="5" height="25" fill="#00008c"/>
<rect x="740" y="584" width="4" height="4" fill="#4dff4d"/>
<rect x="740" y="588" width="4" height="13" fill="#800000"/>
<rect x="740" y="601" width="4" height="47" fill="#00008c"/>
<rect x="745" y="585" width="5" height="7" fill="#4dff4d"/>
<rect x="745" y="592" width="5" height="10" fill="#800000"/>
<rect x="745" y="602" width="5" height="46" fill="#00008c"/>
<rect x="750" y="569" width="5" height="3" fill="#4dff4d"/>
<rect x="750" y="572" width="5" height="19" fill="#800000"/>
<rect x="750" y="591" width="5" height="57" fill="#00008c"/>
<rect x="756" y="613" width="5" height="3" fill="#4dff4d"/>
<rect x="756" y="616" width="5" height="3" fill="#800000"/>
<rect x="756" y="619" width="5" height="29" fill="#00008c"/>
<rect x="761" y="590" width="5" height="23" fill="#4dff4d"/>
<rect x="761" y="613" width="5" height="8" fill="#800000"/>
<rect x="761" y="621" width="5" height="27" fill="#00008c"/>
<rect x="767" y="582" width="4" height="4" fill="#4dff4d"/>
<rect x="767" y="586" width="4" height="15" fill="#800000"/>
<rect x="767" y="601" width="4" height="47" fill="#00008c"/>
<rect x="772" y="561" width="5" height="8" fill="#4dff4d"/>
<rect x="772" y="569" width="5" height="23" fill="#800000"/>
<rect x="772" y="592" width="5" height="56" fill="#00008c"/>
<rect x="777" y="612" width="5" height="6" fill="#4dff4d"/>
<rect x="777" y="618" width="5" height="13" fill="#800000"/>
<rect x="777" y="631" width="5" height="17" fill="#00008c"/>
<rect x="783" y="620" width="5" height="4" fill="#4dff4d"/>
<rect x="783" y="624" width="5" height="10" fill="#800000"/>
<rect x="783" y="634" width="5" height="14" fill="#00008c"/>
<rect x="788" y="576" width="5" height="5" fill="#4dff4d"/>
<rect x="788" y="581" width="5" height="16" fill="#800000"/>
<rect x="788" y="597" width="5" height="51" fill="#00008c"/>
<rect x="794" y="591" width="4" height="5" fill="#4dff4d"/>
<rect x="794" y="596" width="4" height="13" fill="#800000"/>
<rect x="794" y="609" width="4" height="39" fill="#00008c"/>
<rect x="799" y="571" width="5" height="5" fill="#4dff4d"/>
<rect x="799" y="576" width="5" height="11" fill="#800000"/>
<rect x="799" y="587" width="5" height="61" fill="#00008c"/>
<rect x="804" y="569" width="5" height="6" fill="#4dff4d"/>
<rect x="804" y="575" width="5" height="15" fill="#800000"/>
<rect x="804" y="590" width="5" height="58" fill="#00008c"/>
<rect x="810" y="508" width="5" height="6" fill="#4dff4d"/>
<rect x="810" y="514" width="5" height="25" fill="#800000"/>
<rect x="810" y="539" width="5" height="109" fill="#00008c"/>
<rect x="815" y="585" width="5" height="7" fill="#4dff4d"/>
<rect x="815" y="592" width="5" height="13" fill="#800000"/>
<rect x="815" y="605" width="5" height="43" fill="#00008c"/>
<rect x="821" y="582" width="4" height="2" fill="#4dff4d"/>
<rect x="821" y="584" width="4" height="13" fill="#800000"/>
<rect x="821" y="597" width="4" height="51" fill="#00008c"/>
<rect x="826" y="581" width="5" height="4" fill="#4dff4d"/>
<rect x="826" y="585" width="5" height="16" fill="#800000"/>
<rect x="826" y="601" width="5" height="47" fill="#00008c"/>
<rect x="832" y="613" width="4" height="6" fill="#4dff4d"/>
<rect x="832" y="619" width="4" height="7" fill="#800000"/>
<rect x="832" y="626" width="4" height="22" fill="#00008c"/>
<rect x="837" y="568" width="5" height="6" fill="#4dff4d"/>
<rect x="837" y="574" width="5" height="17" fill="#800000"/>
<rect x="837" y="591" width="5" height="57" fill="#00008c"/>
<rect x="842" y="591" width="5" height="8" fill="#4dff4d"/>
<rect x="842" y="599" width="5" height="14" fill="#800000"/>
<rect x="842" y="613" width="5" height="35" fill="#00008c"/>
<rect x="848" y="611" width="5" height="5" fill="#4dff4d"/>
<rect x="848" y="616" width="5" height="8" fill="#800000"/>
<rect x="848" y="624" width="5" height="24" fill="#00008c"/>
<rect x="853" y="591" width="5" height="6" fill="#4dff4d"/>
<rect x="853" y="597" width="5" height="10" fill="#800000"/>
<rect x="853" y="607" width="5" height="41" fill="#00008c"/>
<rect x="859" y="613" width="4" height="1" fill="#4dff4d"/>
<rect x="859" y="614" width="4" height="5" fill="#800000"/>
<rect x="859" y="619" width="4" height="29" fill="#00008c"/>
<rect x="864" y="598" width="5" height="2" fill="#4dff4d"/>
<rect x="864" y="600" width="5" height="8" fill="#800000"/>
<rect x="864" y="608" width="5" height="40" fill="#00008c"/>
<rect x="869" y="600" width="5" height="8" fill="#4dff4d"/>
<rect x="869" y="608" width="5" height="13" fill="#800000"/>
<rect x="869" y="621" width="5" height="27" fill="#00008c"/>
<rect x="875" y="598" width="5" height="4" fill="#4dff4d"/>
<rect x="875" y="602" width="5" height="11" fill="#800000"/>
<rect x="875" y="613" width="5" height="35" fill="#00008c"/>
<rect x="880" y="600" width="5" height="5" fill="#4dff4d"/>
<rect x="880" y="605" width="5" height="11" fill="#800000"/>
<rect x="880" y="616" width="5" height="32" fill="#00008c"/>
<rect x="886" y="602" width="4" height="13" fill="#4dff4d"/>
<rect x="886" y="615" width="4" height="11" fill="#800000"/>
<rect x="886" y="626" width="4" height="22" fill="#00008c"/>
<rect x="891" y="568" width="5" height="6" fill="#4dff4d"/>
<rect x="891" y="574" width="5" height="22" fill="#800000"/>
<rect x="891" y="596" width="5" height="52" fill="#00008c"/>
<rect x="896" y="609" width="5" height="4" fill="#4dff4d"/>
<rect x="896" y="613" width="5" height="12" fill="#800000"/>
<rect x="896" y="625" width="5" height="23" fill="#00008c"/>
<rect x="902" y="591" width="5" height="6" fill="#4dff4d"/>
<rect x="902" y="597" width="5" height="11" fill="#800000"/>
<rect x="902" y="608" width="5" height="40" fill="#00008c"/>
<rect x="907" y="608" width="5" height="4" fill="#4dff4d"/>
<rect x="907" y="612" width="5" height="7" fill="#800000"/>
<rect x="907" y="619" width="5" height="29" fill="#00008c"/>
<rect x="913" y="594" width="4" height="2" fill="#4dff4d"/>
<rect x="913" y="596" width="4" height="9" fill="#800000"/>
<rect x="913" y="605" width="4" height="43" fill="#00008c"/>
<rect x="918" y="614" width="5" height="6" fill="#4dff4d"/>
<rect x="918" y="620" width="5" height="7" fill="#800000"/>
<rect x="918" y="627" width="5" height="21" fill="#00008c"/>
<rect x="923" y="589" width="5" height="9" fill="#4dff4d"/>
<rect x="923" y="598" width="5" height="18" fill="#800000"/>
<rect x="923" y="616" width="5" height="32" fill="#00008c"/>
<rect x="929" y="597" width="5" height="5" fill="#4dff4d"/>
<rect x="929" y="602" width="5" height="4" fill="#800000"/>
<rect x="929" y="606" width="5" height="42" fill="#00008c"/>
<rect x="934" y="464" width="5" height="60" fill="#4dff4d"/>
<rect x="934" y="524" width="5" height="28" fill="#800000"/>
<rect x="934" y="552" width="5" height="96" fill="#00008c"/>
<rect x="67" y="13" width="875" height="1" fill="#000"/>
<rect x="67" y="216" width="875" height="1" fill="#000"/>
<rect x="67" y="13" width="1" height="204" fill="#000"/>
<rect x="941" y="13" width="1" height="204" fill="#000"/>
<rect x="67" y="230" width="875" height="1" fill="#000"/>
<rect x="67" y="432" width="875" height="1" fill="#000"/>
<rect x="67" y="230" width="1" height="203" fill="#000"/>
<rect x="941" y="230" width="1" height="203" fill="#000"/>
<rect x="67" y="446" width="875" height="1" fill="#000"/>
<rect x="67" y="648" width="875" height="1" fill="#000"/>
<rect x="67" y="446" width="1" height="203" fill="#000"/>
<rect x="941" y="446" width="1" height="203" fill="#000"/>
<text x="61.5" y="23" text-anchor="end" class="tk">300</text>
<text x="61.5" y="56" text-anchor="end" class="tk">250</text>
<text x="61.5" y="89" text-anchor="end" class="tk">200</text>
<text x="61.5" y="121" text-anchor="end" class="tk">150</text>
<text x="61.5" y="154" text-anchor="end" class="tk">100</text>
<text x="61.5" y="187" text-anchor="end" class="tk">50</text>
<text x="61.5" y="220" text-anchor="end" class="tk">0</text>
<text x="61.5" y="236" text-anchor="end" class="tk">35</text>
<text x="61.5" y="265" text-anchor="end" class="tk">30</text>
<text x="61.5" y="293" text-anchor="end" class="tk">25</text>
<text x="61.5" y="322" text-anchor="end" class="tk">20</text>
<text x="61.5" y="351" text-anchor="end" class="tk">15</text>
<text x="61.5" y="379" text-anchor="end" class="tk">10</text>
<text x="61.5" y="408" text-anchor="end" class="tk">5</text>
<text x="61.5" y="436" text-anchor="end" class="tk">0</text>
<text x="61.5" y="466" text-anchor="end" class="tk">10</text>
<text x="61.5" y="503" text-anchor="end" class="tk">8</text>
<text x="61.5" y="540" text-anchor="end" class="tk">6</text>
<text x="61.5" y="577" text-anchor="end" class="tk">4</text>
<text x="61.5" y="614" text-anchor="end" class="tk">2</text>
<text x="61.5" y="652" text-anchor="end" class="tk">0</text>
<text transform="translate(30.5,115) rotate(-90)" text-anchor="middle" class="yt"># mutations</text>
<text transform="translate(37,333.5) rotate(-90)" text-anchor="middle" class="yt">Mb sequenced</text>
<text transform="translate(37,549.5) rotate(-90)" text-anchor="middle" class="yt">mutations / Mb</text>
<text x="818.5" y="40" class="lg" fill="#4dff4d">dbSNP</text>
<text x="818.5" y="60" class="lg" fill="#800000">silent</text>
<text x="818.5" y="80" class="lg" fill="#00008c">nonsilent</text>
<defs><filter id="th" x="0" y="0" width="100%" height="100%"><feComponentTransfer><feFuncA type="discrete" tableValues="0 0 1"/></feComponentTransfer></filter></defs><g filter="url(#th)"><text transform="translate(77.36,666.3) rotate(-90) scale(0.85,1)" text-anchor="end" class="xl">TCGA-52-6018-TP</text>
<text transform="translate(82.77,666.3) rotate(-90) scale(0.85,1)" text-anchor="end" class="xl">TCGA-15-9083-TP</text>
<text transform="translate(88.18,666.3) rotate(-90) scale(0.85,1)" text-anchor="end" class="xl">TCGA-01-6613-TP</text>
<text transform="translate(93.59,666.3) rotate(-90) scale(0.85,1)" text-anchor="end" class="xl">TCGA-18-6091-TP</text>
<text transform="translate(99.00,666.3) rotate(-90) scale(0.85,1)" text-anchor="end" class="xl">TCGA-39-0996-TP</text>
<text transform="translate(104.41,666.3) rotate(-90) scale(0.85,1)" text-anchor="end" class="xl">TCGA-03-0824-TP</text>
<text transform="translate(109.82,666.3) rotate(-90) scale(0.85,1)" text-anchor="end" class="xl">TCGA-62-8194-TP</text>
<text transform="translate(115.22,666.3) rotate(-90) scale(0.85,1)" text-anchor="end" class="xl">TCGA-82-1993-TP</text>
<text transform="translate(120.63,666.3) rotate(-90) scale(0.85,1)" text-anchor="end" class="xl">TCGA-51-8190-TP</text>
<text transform="translate(126.04,666.3) rotate(-90) scale(0.85,1)" text-anchor="end" class="xl">TCGA-93-7865-TP</text>
<text transform="translate(131.45,666.3) rotate(-90) scale(0.85,1)" text-anchor="end" class="xl">TCGA-79-7543-TP</text>
<text transform="translate(136.86,666.3) rotate(-90) scale(0.85,1)" text-anchor="end" class="xl">TCGA-23-1948-TP</text>
<text transform="translate(142.27,666.3) rotate(-90) scale(0.85,1)" text-anchor="end" class="xl">TCGA-75-7491-TP</text>
<text transform="translate(147.68,666.3) rotate(-90) scale(0.85,1)" text-anchor="end" class="xl">TCGA-18-6252-TP</text>
<text transform="translate(153.08,666.3) rotate(-90) scale(0.85,1)" text-anchor="end" class="xl">TCGA-76-0189-TP</text>
<text transform="translate(158.49,666.3) rotate(-90) scale(0.85,1)" text-anchor="end" class="xl">TCGA-55-5979-TP</text>
<text transform="translate(163.90,666.3) rotate(-90) scale(0.85,1)" text-anchor="end" class="xl">TCGA-71-1471-TP</text>
<text transform="translate(169.31,666.3) rotate(-90) scale(0.85,1)" text-anchor="end" class="xl">TCGA-04-9746-TP</text>
<text transform="translate(174.72,666.3) rotate(-90) scale(0.85,1)" text-anchor="end" class="xl">TCGA-50-7529-TP</text>
<text transform="translate(180.13,666.3) rotate(-90) scale(0.85,1)" text-anchor="end" class="xl">TCGA-17-0342-TP</text>
<text transform="translate(185.54,666.3) rotate(-90) scale(0.85,1)" text-anchor="end" class="xl">TCGA-36-6712-TP</text>
<text transform="translate(190.94,666.3) rotate(-90) scale(0.85,1)" text-anchor="end" class="xl">TCGA-76-8426-TP</text>
<text transform="translate(196.35,666.3) rotate(-90) scale(0.85,1)" text-anchor="end" class="xl">TCGA-84-6563-TP</text>
<text transform="translate(201.76,666.3) rotate(-90) scale(0.85,1)" text-anchor="end" class="xl">TCGA-21-2233-TP</text>
<text transform="translate(207.17,666.3) rotate(-90) scale(0.85,1)" text-anchor="end" class="xl">TCGA-07-9244-TP</text>
<text transform="translate(212.58,666.3) rotate(-90) scale(0.85,1)" text-anchor="end" class="xl">TCGA-02-6859-TP</text>
<text transform="translate(217.99,666.3) rotate(-90) scale(0.85,1)" text-anchor="end" class="xl">TCGA-95-2890-TP</text>
<text transform="translate(223.40,666.3) rotate(-90) scale(0.85,1)" text-anchor="end" class="xl">TCGA-78-6666-TP</text>
<text transform="translate(228.80,666.3) rotate(-90) scale(0.85,1)" text-anchor="end" class="xl">TCGA-17-6031-TP</text>
<text transform="translate(234.21,666.3) rotate(-90) scale(0.85,1)" text-anchor="end" class="xl">TCGA-37-2159-TP</text>
<text transform="translate(239.62,666.3) rotate(-90) scale(0.85,1)" text-anchor="end" class="xl">TCGA-01-0928-TP</text>
<text transform="translate(245.03,666.3) rotate(-90) scale(0.85,1)" text-anchor="end" class="xl">TCGA-15-9013-TP</text>
<text transform="translate(250.44,666.3) rotate(-90) scale(0.85,1)" text-anchor="end" class="xl">TCGA-96-2459-TP</text>
<text transform="translate(255.85,666.3) rotate(-90) scale(0.85,1)" text-anchor="end" class="xl">TCGA-57-1177-TP</text>
<text transform="translate(261.26,666.3) rotate(-90) scale(0.85,1)" text-anchor="end" class="xl">TCGA-77-4121-TP</text>
<text transform="translate(266.66,666.3) rotate(-90) scale(0.85,1)" text-anchor="end" class="xl">TCGA-54-7280-TP</text>
<text transform="translate(272.07,666.3) rotate(-90) scale(0.85,1)" text-anchor="end" class="xl">TCGA-38-5280-TP</text>
<text transform="translate(277.48,666.3) rotate(-90) scale(0.85,1)" text-anchor="end" class="xl">TCGA-84-1485-TP</text>
<text transform="translate(282.89,666.3) rotate(-90) scale(0.85,1)" text-anchor="end" class="xl">TCGA-25-3888-TP</text>
<text transform="translate(288.30,666.3) rotate(-90) scale(0.85,1)" text-anchor="end" class="xl">TCGA-53-9336-TP</text>
<text transform="translate(293.71,666.3) rotate(-90) scale(0.85,1)" text-anchor="end" class="xl">TCGA-33-8750-TP</text>
<text transform="translate(299.12,666.3) rotate(-90) scale(0.85,1)" text-anchor="end" class="xl">TCGA-04-7439-TP</text>
<text transform="translate(304.52,666.3) rotate(-90) scale(0.85,1)" text-anchor="end" class="xl">TCGA-57-5513-TP</text>
<text transform="translate(309.93,666.3) rotate(-90) scale(0.85,1)" text-anchor="end" class="xl">TCGA-13-7353-TP</text>
<text transform="translate(315.34,666.3) rotate(-90) scale(0.85,1)" text-anchor="end" class="xl">TCGA-79-9075-TP</text>
<text transform="translate(320.75,666.3) rotate(-90) scale(0.85,1)" text-anchor="end" class="xl">TCGA-11-6372-TP</text>
<text transform="translate(326.16,666.3) rotate(-90) scale(0.85,1)" text-anchor="end" class="xl">TCGA-65-1676-TP</text>
<text transform="translate(331.57,666.3) rotate(-90) scale(0.85,1)" text-anchor="end" class="xl">TCGA-12-2202-TP</text>
<text transform="translate(336.98,666.3) rotate(-90) scale(0.85,1)" text-anchor="end" class="xl">TCGA-97-2997-TP</text>
<text transform="translate(342.38,666.3) rotate(-90) scale(0.85,1)" text-anchor="end" class="xl">TCGA-52-8820-TP</text>
<text transform="translate(347.79,666.3) rotate(-90) scale(0.85,1)" text-anchor="end" class="xl">TCGA-01-8263-TP</text>
<text transform="translate(353.20,666.3) rotate(-90) scale(0.85,1)" text-anchor="end" class="xl">TCGA-30-4348-TP</text>
<text transform="translate(358.61,666.3) rotate(-90) scale(0.85,1)" text-anchor="end" class="xl">TCGA-39-5486-TP</text>
<text transform="translate(364.02,666.3) rotate(-90) scale(0.85,1)" text-anchor="end" class="xl">TCGA-20-5798-TP</text>
<text transform="translate(369.43,666.3) rotate(-90) scale(0.85,1)" text-anchor="end" class="xl">TCGA-68-2828-TP</text>
<text transform="translate(374.84,666.3) rotate(-90) scale(0.85,1)" text-anchor="end" class="xl">TCGA-80-7290-TP</text>
<text transform="translate(380.24,666.3) rotate(-90) scale(0.85,1)" text-anchor="end" class="xl">TCGA-22-2791-TP</text>
<text transform="translate(385.65,666.3) rotate(-90) scale(0.85,1)" text-anchor="end" class="xl">TCGA-80-5888-TP</text>
<text transform="translate(391.06,666.3) rotate(-90) scale(0.85,1)" text-anchor="end" class="xl">TCGA-71-8033-TP</text>
<text transform="translate(396.47,666.3) rotate(-90) scale(0.85,1)" text-anchor="end" class="xl">TCGA-40-1878-TP</text>
<text transform="translate(401.88,666.3) rotate(-90) scale(0.85,1)" text-anchor="end" class="xl">TCGA-01-7598-TP</text>
<text transform="translate(407.29,666.3) rotate(-90) scale(0.85,1)" text-anchor="end" class="xl">TCGA-98-3478-TP</text>
<text transform="translate(412.70,666.3) rotate(-90) scale(0.85,1)" text-anchor="end" class="xl">TCGA-87-8384-TP</text>
<text transform="translate(418.10,666.3) rotate(-90) scale(0.85,1)" text-anchor="end" class="xl">TCGA-83-7261-TP</text>
<text transform="translate(423.51,666.3) rotate(-90) scale(0.85,1)" text-anchor="end" class="xl">TCGA-67-5136-TP</text>
<text transform="translate(428.92,666.3) rotate(-90) scale(0.85,1)" text-anchor="end" class="xl">TCGA-13-4125-TP</text>
<text transform="translate(434.33,666.3) rotate(-90) scale(0.85,1)" text-anchor="end" class="xl">TCGA-24-2731-TP</text>
<text transform="translate(439.74,666.3) rotate(-90) scale(0.85,1)" text-anchor="end" class="xl">TCGA-67-2326-TP</text>
<text transform="translate(445.15,666.3) rotate(-90) scale(0.85,1)" text-anchor="end" class="xl">TCGA-86-5635-TP</text>
<text transform="translate(450.56,666.3) rotate(-90) scale(0.85,1)" text-anchor="end" class="xl">TCGA-51-5058-TP</text>
<text transform="translate(455.96,666.3) rotate(-90) scale(0.85,1)" text-anchor="end" class="xl">TCGA-77-0658-TP</text>
<text transform="translate(461.37,666.3) rotate(-90) scale(0.85,1)" text-anchor="end" class="xl">TCGA-94-8113-TP</text>
<text transform="translate(466.78,666.3) rotate(-90) scale(0.85,1)" text-anchor="end" class="xl">TCGA-11-4402-TP</text>
<text transform="translate(472.19,666.3) rotate(-90) scale(0.85,1)" text-anchor="end" class="xl">TCGA-42-6462-TP</text>
<text transform="translate(477.60,666.3) rotate(-90) scale(0.85,1)" text-anchor="end" class="xl">TCGA-88-9751-TP</text>
<text transform="translate(483.01,666.3) rotate(-90) scale(0.85,1)" text-anchor="end" class="xl">TCGA-40-2614-TP</text>
<text transform="translate(488.42,666.3) rotate(-90) scale(0.85,1)" text-anchor="end" class="xl">TCGA-01-4193-TP</text>
<text transform="translate(493.82,666.3) rotate(-90) scale(0.85,1)" text-anchor="end" class="xl">TCGA-14-1705-TP</text>
<text transform="translate(499.23,666.3) rotate(-90) scale(0.85,1)" text-anchor="end" class="xl">TCGA-86-4920-TP</text>
<text transform="translate(504.64,666.3) rotate(-90) scale(0.85,1)" text-anchor="end" class="xl">TCGA-83-1240-TP</text>
<text transform="translate(510.05,666.3) rotate(-90) scale(0.85,1)" text-anchor="end" class="xl">TCGA-23-4483-TP</text>
<text transform="translate(515.46,666.3) rotate(-90) scale(0.85,1)" text-anchor="end" class="xl">TCGA-47-8245-TP</text>
<text transform="translate(520.87,666.3) rotate(-90) scale(0.85,1)" text-anchor="end" class="xl">TCGA-04-0008-TP</text>
<text transform="translate(526.28,666.3) rotate(-90) scale(0.85,1)" text-anchor="end" class="xl">TCGA-83-8737-TP</text>
<text transform="translate(531.68,666.3) rotate(-90) scale(0.85,1)" text-anchor="end" class="xl">TCGA-16-7868-TP</text>
<text transform="translate(537.09,666.3) rotate(-90) scale(0.85,1)" text-anchor="end" class="xl">TCGA-43-3532-TP</text>
<text transform="translate(542.50,666.3) rotate(-90) scale(0.85,1)" text-anchor="end" class="xl">TCGA-65-0201-TP</text>
<text transform="translate(547.91,666.3) rotate(-90) scale(0.85,1)" text-anchor="end" class="xl">TCGA-46-2016-TP</text>
<text transform="translate(553.32,666.3) rotate(-90) scale(0.85,1)" text-anchor="end" class="xl">TCGA-84-9340-TP</text>
<text transform="translate(558.73,666.3) rotate(-90) scale(0.85,1)" text-anchor="end" class="xl">TCGA-72-2470-TP</text>
<text transform="translate(564.14,666.3) rotate(-90) scale(0.85,1)" text-anchor="end" class="xl">TCGA-45-5853-TP</text>
<text transform="translate(569.54,666.3) rotate(-90) scale(0.85,1)" text-anchor="end" class="xl">TCGA-04-3520-TP</text>
<text transform="translate(574.95,666.3) rotate(-90) scale(0.85,1)" text-anchor="end" class="xl">TCGA-56-1748-TP</text>
<text transform="translate(580.36,666.3) rotate(-90) scale(0.85,1)" text-anchor="end" class="xl">TCGA-33-8014-TP</text>
<text transform="translate(585.77,666.3) rotate(-90) scale(0.85,1)" text-anchor="end" class="xl">TCGA-12-6906-TP</text>
<text transform="translate(591.18,666.3) rotate(-90) scale(0.85,1)" text-anchor="end" class="xl">TCGA-04-4319-TP</text>
<text transform="translate(596.59,666.3) rotate(-90) scale(0.85,1)" text-anchor="end" class="xl">TCGA-82-9657-TP</text>
<text transform="translate(602.00,666.3) rotate(-90) scale(0.85,1)" text-anchor="end" class="xl">TCGA-24-9208-TP</text>
<text transform="translate(607.40,666.3) rotate(-90) scale(0.85,1)" text-anchor="end" class="xl">TCGA-68-2889-TP</text>
<text transform="translate(612.81,666.3) rotate(-90) scale(0.85,1)" text-anchor="end" class="xl">TCGA-09-3100-TP</text>
<text transform="translate(618.22,666.3) rotate(-90) scale(0.85,1)" text-anchor="end" class="xl">TCGA-25-1678-TP</text>
<text transform="translate(623.63,666.3) rotate(-90) scale(0.85,1)" text-anchor="end" class="xl">TCGA-00-8374-TP</text>
<text transform="translate(629.04,666.3) rotate(-90) scale(0.85,1)" text-anchor="end" class="xl">TCGA-07-1881-TP</text>
<text transform="translate(634.45,666.3) rotate(-90) scale(0.85,1)" text-anchor="end" class="xl">TCGA-81-7414-TP</text>
<text transform="translate(639.86,666.3) rotate(-90) scale(0.85,1)" text-anchor="end" class="xl">TCGA-33-3776-TP</text>
<text transform="translate(645.26,666.3) rotate(-90) scale(0.85,1)" text-anchor="end" class="xl">TCGA-17-4093-TP</text>
<text transform="translate(650.67,666.3) rotate(-90) scale(0.85,1)" text-anchor="end" class="xl">TCGA-19-2544-TP</text>
<text transform="translate(656.08,666.3) rotate(-90) scale(0.85,1)" text-anchor="end" class="xl">TCGA-99-2070-TP</text>
<text transform="translate(661.49,666.3) rotate(-90) scale(0.85,1)" text-anchor="end" class="xl">TCGA-74-1374-TP</text>
<text transform="translate(666.90,666.3) rotate(-90) scale(0.85,1)" text-anchor="end" class="xl">TCGA-84-7771-TP</text>
<text transform="translate(672.31,666.3) rotate(-90) scale(0.85,1)" text-anchor="end" class="xl">TCGA-83-4170-TP</text>
<text transform="translate(677.72,666.3) rotate(-90) scale(0.85,1)" text-anchor="end" class="xl">TCGA-47-1874-TP</text>
<text transform="translate(683.12,666.3) rotate(-90) scale(0.85,1)" text-anchor="end" class="xl">TCGA-63-3191-TP</text>
<text transform="translate(688.53,666.3) rotate(-90) scale(0.85,1)" text-anchor="end" class="xl">TCGA-28-4529-TP</text>
<text transform="translate(693.94,666.3) rotate(-90) scale(0.85,1)" text-anchor="end" class="xl">TCGA-84-1537-TP</text>
<text transform="translate(699.35,666.3) rotate(-90) scale(0.85,1)" text-anchor="end" class="xl">TCGA-76-0207-TP</text>
<text transform="translate(704.76,666.3) rotate(-90) scale(0.85,1)" text-anchor="end" class="xl">TCGA-76-4265-TP</text>
<text transform="translate(710.17,666.3) rotate(-90) scale(0.85,1)" text-anchor="end" class="xl">TCGA-65-1505-TP</text>
<text transform="translate(715.58,666.3) rotate(-90) scale(0.85,1)" text-anchor="end" class="xl">TCGA-56-1304-TP</text>
<text transform="translate(720.98,666.3) rotate(-90) scale(0.85,1)" text-anchor="end" class="xl">TCGA-45-1669-TP</text>
<text transform="translate(726.39,666.3) rotate(-90) scale(0.85,1)" text-anchor="end" class="xl">TCGA-15-6404-TP</text>
<text transform="translate(731.80,666.3) rotate(-90) scale(0.85,1)" text-anchor="end" class="xl">TCGA-10-4234-TP</text>
<text transform="translate(737.21,666.3) rotate(-90) scale(0.85,1)" text-anchor="end" class="xl">TCGA-68-5356-TP</text>
<text transform="translate(742.62,666.3) rotate(-90) scale(0.85,1)" text-anchor="end" class="xl">TCGA-06-8831-TP</text>
<text transform="translate(748.03,666.3) rotate(-90) scale(0.85,1)" text-anchor="end" class="xl">TCGA-06-7924-TP</text>
<text transform="translate(753.44,666.3) rotate(-90) scale(0.85,1)" text-anchor="end" class="xl">TCGA-70-8227-TP</text>
<text transform="translate(758.84,666.3) rotate(-90) scale(0.85,1)" text-anchor="end" class="xl">TCGA-65-4444-TP</text>
<text transform="translate(764.25,666.3) rotate(-90) scale(0.85,1)" text-anchor="end" class="xl">TCGA-63-4786-TP</text>
<text transform="translate(769.66,666.3) rotate(-90) scale(0.85,1)" text-anchor="end" class="xl">TCGA-12-2138-TP</text>
<text transform="translate(775.07,666.3) rotate(-90) scale(0.85,1)" text-anchor="end" class="xl">TCGA-78-3757-TP</text>
<text transform="translate(780.48,666.3) rotate(-90) scale(0.85,1)" text-anchor="end" class="xl">TCGA-62-8331-TP</text>
<text transform="translate(785.89,666.3) rotate(-90) scale(0.85,1)" text-anchor="end" class="xl">TCGA-25-8153-TP</text>
<text transform="translate(791.30,666.3) rotate(-90) scale(0.85,1)" text-anchor="end" class="xl">TCGA-54-9306-TP</text>
<text transform="translate(796.70,666.3) rotate(-90) scale(0.85,1)" text-anchor="end" class="xl">TCGA-66-8364-TP</text>
<text transform="translate(802.11,666.3) rotate(-90) scale(0.85,1)" text-anchor="end" class="xl">TCGA-50-7495-TP</text>
<text transform="translate(807.52,666.3) rotate(-90) scale(0.85,1)" text-anchor="end" class="xl">TCGA-28-8314-TP</text>
<text transform="translate(812.93,666.3) rotate(-90) scale(0.85,1)" text-anchor="end" class="xl">TCGA-36-6764-TP</text>
<text transform="translate(818.34,666.3) rotate(-90) scale(0.85,1)" text-anchor="end" class="xl">TCGA-02-0679-TP</text>
<text transform="translate(823.75,666.3) rotate(-90) scale(0.85,1)" text-anchor="end" class="xl">TCGA-70-1687-TP</text>
<text transform="translate(829.16,666.3) rotate(-90) scale(0.85,1)" text-anchor="end" class="xl">TCGA-73-1322-TP</text>
<text transform="translate(834.56,666.3) rotate(-90) scale(0.85,1)" text-anchor="end" class="xl">TCGA-81-7180-TP</text>
<text transform="translate(839.97,666.3) rotate(-90) scale(0.85,1)" text-anchor="end" class="xl">TCGA-02-3904-TP</text>
<text transform="translate(845.38,666.3) rotate(-90) scale(0.85,1)" text-anchor="end" class="xl">TCGA-24-8611-TP</text>
<text transform="translate(850.79,666.3) rotate(-90) scale(0.85,1)" text-anchor="end" class="xl">TCGA-14-8936-TP</text>
<text transform="translate(856.20,666.3) rotate(-90) scale(0.85,1)" text-anchor="end" class="xl">TCGA-43-9008-TP</text>
<text transform="translate(861.61,666.3) rotate(-90) scale(0.85,1)" text-anchor="end" class="xl">TCGA-47-4537-TP</text>
<text transform="translate(867.02,666.3) rotate(-90) scale(0.85,1)" text-anchor="end" class="xl">TCGA-83-8306-TP</text>
<text transform="translate(872.42,666.3) rotate(-90) scale(0.85,1)" text-anchor="end" class="xl">TCGA-40-0376-TP</text>
<text transform="translate(877.83,666.3) rotate(-90) scale(0.85,1)" text-anchor="end" class="xl">TCGA-14-3653-TP</text>
<text transform="translate(883.24,666.3) rotate(-90) scale(0.85,1)" text-anchor="end" class="xl">TCGA-70-5656-TP</text>
<text transform="translate(888.65,666.3) rotate(-90) scale(0.85,1)" text-anchor="end" class="xl">TCGA-30-4813-TP</text>
<text transform="translate(894.06,666.3) rotate(-90) scale(0.85,1)" text-anchor="end" class="xl">TCGA-73-4337-TP</text>
<text transform="translate(899.47,666.3) rotate(-90) scale(0.85,1)" text-anchor="end" class="xl">TCGA-34-4197-TP</text>
<text transform="translate(904.88,666.3) rotate(-90) scale(0.85,1)" text-anchor="end" class="xl">TCGA-92-3760-TP</text>
<text transform="translate(910.28,666.3) rotate(-90) scale(0.85,1)" text-anchor="end" class="xl">TCGA-92-6030-TP</text>
<text transform="translate(915.69,666.3) rotate(-90) scale(0.85,1)" text-anchor="end" class="xl">TCGA-92-6002-TP</text>
<text transform="translate(921.10,666.3) rotate(-90) scale(0.85,1)" text-anchor="end" class="xl">TCGA-67-5112-TP</text>
<text transform="translate(926.51,666.3) rotate(-90) scale(0.85,1)" text-anchor="end" class="xl">TCGA-53-2870-TP</text>
<text transform="translate(931.92,666.3) rotate(-90) scale(0.85,1)" text-anchor="end" class="xl">TCGA-46-5572-TP</text>
<text transform="translate(937.33,666.3) rotate(-90) scale(0.85,1)" text-anchor="end" class="xl">TCGA-10-1415-TP</text>
<text transform="translate(942.74,666.3) rotate(-90) scale(0.85,1)" text-anchor="end" class="xl">TCGA-61-8365-TP</text></g><rect x="65" y="675" width="1" height="10" fill="#000"/><rect x="71" y="675" width="1" height="10" fill="#000"/><rect x="76" y="675" width="1" height="10" fill="#000"/><rect x="82" y="675" width="1" height="10" fill="#000"/><rect x="87" y="675" width="1" height="10" fill="#000"/><rect x="92" y="675" width="1" height="10" fill="#000"/><rect x="98" y="675" width="1" height="10" fill="#000"/><rect x="103" y="675" width="1" height="10" fill="#000"/><rect x="109" y="675" width="1" height="10" fill="#000"/><rect x="114" y="675" width="1" height="10" fill="#000"/><rect x="119" y="675" width="1" height="10" fill="#000"/><rect x="125" y="675" width="1" height="10" fill="#000"/><rect x="130" y="675" width="1" height="10" fill="#000"/><rect x="136" y="675" width="1" height="10" fill="#000"/><rect x="141" y="675" width="1" height="10" fill="#000"/><rect x="146" y="675" width="1" height="10" fill="#000"/><rect x="152" y="675" width="1" height="10" fill="#000"/><rect x="157" y="675" width="1" height="10" fill="#000"/><rect x="163" y="675" width="1" height="10" fill="#000"/><rect x="168" y="675" width="1" height="10" fill="#000"/><rect x="174" y="675" width="1" height="10" fill="#000"/><rect x="179" y="675" width="1" height="10" fill="#000"/><rect x="184" y="675" width="1" height="10" fill="#000"/><rect x="190" y="675" width="1" height="10" fill="#000"/><rect x="195" y="675" width="1" height="10" fill="#000"/><rect x="201" y="675" width="1" height="10" fill="#000"/><rect x="206" y="675" width="1" height="10" fill="#000"/><rect x="211" y="675" width="1" height="10" fill="#000"/><rect x="217" y="675" width="1" height="10" fill="#000"/><rect x="222" y="675" width="1" height="10" fill="#000"/><rect x="228" y="675" width="1" height="10" fill="#000"/><rect x="233" y="675" width="1" height="10" fill="#000"/><rect x="238" y="675" width="1" height="10" fill="#000"/><rect x="244" y="675" width="1" height="10" fill="#000"/><rect x="249" y="675" width="1" height="10" fill="#000"/><rect x="255" y="675" width="1" height="10" fill="#000"/><rect x="260" y="675" width="1" height="10" fill="#000"/><rect x="265" y="675" width="1" height="10" fill="#000"/><rect x="271" y="675" width="1" height="10" fill="#000"/><rect x="276" y="675" width="1" height="10" fill="#000"/><rect x="282" y="675" width="1" height="10" fill="#000"/><rect x="287" y="675" width="1" height="10" fill="#000"/><rect x="293" y="675" width="1" height="10" fill="#000"/><rect x="298" y="675" width="1" height="10" fill="#000"/><rect x="303" y="675" width="1" height="10" fill="#000"/><rect x="309" y="675" width="1" height="10" fill="#000"/><rect x="314" y="675" width="1" height="10" fill="#000"/><rect x="320" y="675" width="1" height="10" fill="#000"/><rect x="325" y="675" width="1" height="10" fill="#000"/><rect x="330" y="675" width="1" height="10" fill="#000"/><rect x="336" y="675" width="1" height="10" fill="#000"/><rect x="341" y="675" width="1" height="10" fill="#000"/><rect x="347" y="675" width="1" height="10" fill="#000"/><rect x="352" y="675" width="1" height="10" fill="#000"/><rect x="357" y="675" width="1" height="10" fill="#000"/><rect x="363" y="675" width="1" height="10" fill="#000"/><rect x="368" y="675" width="1" height="10" fill="#000"/><rect x="374" y="675" width="1" height="10" fill="#000"/><rect x="379" y="675" width="1" height="10" fill="#000"/><rect x="384" y="675" width="1" height="10" fill="#000"/><rect x="390" y="675" width="1" height="10" fill="#000"/><rect x="395" y="675" width="1" height="10" fill="#000"/><rect x="401" y="675" width="1" height="10" fill="#000"/><rect x="406" y="675" width="1" height="10" fill="#000"/><rect x="412" y="675" width="1" height="10" fill="#000"/><rect x="417" y="675" width="1" height="10" fill="#000"/><rect x="422" y="675" width="1" height="10" fill="#000"/><rect x="428" y="675" width="1" height="10" fill="#000"/><rect x="433" y="675" width="1" height="10" fill="#000"/><rect x="439" y="675" width="1" height="10" fill="#000"/><rect x="444" y="675" width="1" height="10" fill="#000"/><rect x="449" y="675" width="1" height="10" fill="#000"/><rect x="455" y="675" width="1" height="10" fill="#000"/><rect x="460" y="675" width="1" height="10" fill="#000"/><rect x="466" y="675" width="1" height="10" fill="#000"/><rect x="471" y="675" width="1" height="10" fill="#000"/><rect x="476" y="675" width="1" height="10" fill="#000"/><rect x="482" y="675" width="1" height="10" fill="#000"/><rect x="487" y="675" width="1" height="10" fill="#000"/><rect x="493" y="675" width="1" height="10" fill="#000"/><rect x="498" y="675" width="1" height="10" fill="#000"/><rect x="503" y="675" width="1" height="10" fill="#000"/><rect x="509" y="675" width="1" height="10" fill="#000"/><rect x="514" y="675" width="1" height="10" fill="#000"/><rect x="520" y="675" width="1" height="10" fill="#000"/><rect x="525" y="675" width="1" height="10" fill="#000"/><rect x="531" y="675" width="1" height="10" fill="#000"/><rect x="536" y="675" width="1" height="10" fill="#000"/><rect x="541" y="675" width="1" height="10" fill="#000"/><rect x="547" y="675" width="1" height="10" fill="#000"/><rect x="552" y="675" width="1" height="10" fill="#000"/><rect x="558" y="675" width="1" height="10" fill="#000"/><rect x="563" y="675" width="1" height="10" fill="#000"/><rect x="568" y="675" width="1" height="10" fill="#000"/><rect x="574" y="675" width="1" height="10" fill="#000"/><rect x="579" y="675" width="1" height="10" fill="#000"/><rect x="585" y="675" width="1" height="10" fill="#000"/><rect x="590" y="675" width="1" height="10" fill="#000"/><rect x="595" y="675" width="1" height="10" fill="#000"/><rect x="601" y="675" width="1" height="10" fill="#000"/><rect x="606" y="675" width="1" height="10" fill="#000"/><rect x="612" y="675" width="1" height="10" fill="#000"/><rect x="617" y="675" width="1" height="10" fill="#000"/><rect x="622" y="675" width="1" height="10" fill="#000"/><rect x="628" y="675" width="1" height="10" fill="#000"/><rect x="633" y="675" width="1" height="10" fill="#000"/><rect x="639" y="675" width="1" height="10" fill="#000"/><rect x="644" y="675" width="1" height="10" fill="#000"/><rect x="649" y="675" width="1" height="10" fill="#000"/><rect x="655" y="675" width="1" height="10" fill="#000"/><rect x="660" y="675" width="1" height="10" fill="#000"/><rect x="666" y="675" width="1" height="10" fill="#000"/><rect x="671" y="675" width="1" height="10" fill="#000"/><rect x="677" y="675" width="1" height="10" fill="#000"/><rect x="682" y="675" width="1" height="10" fill="#000"/><rect x="687" y="675" width="1" height="10" fill="#000"/><rect x="693" y="675" width="1" height="10" fill="#000"/><rect x="698" y="675" width="1" height="10" fill="#000"/><rect x="704" y="675" width="1" height="10" fill="#000"/><rect x="709" y="675" width="1" height="10" fill="#000"/><rect x="714" y="675" width="1" height="10" fill="#000"/><rect x="720" y="675" width="1" height="10" fill="#000"/><rect x="725" y="675" width="1" height="10" fill="#000"/><rect x="731" y="675" width="1" height="10" fill="#000"/><rect x="736" y="675" width="1" height="10" fill="#000"/><rect x="741" y="675" width="1" height="10" fill="#000"/><rect x="747" y="675" width="1" height="10" fill="#000"/><rect x="752" y="675" width="1" height="10" fill="#000"/><rect x="758" y="675" width="1" height="10" fill="#000"/><rect x="763" y="675" width="1" height="10" fill="#000"/><rect x="768" y="675" width="1" height="10" fill="#000"/><rect x="774" y="675" width="1" height="10" fill="#000"/><rect x="779" y="675" width="1" height="10" fill="#000"/><rect x="785" y="675" width="1" height="10" fill="#000"/><rect x="790" y="675" width="1" height="10" fill="#000"/><rect x="796" y="675" width="1" height="10" fill="#000"/><rect x="801" y="675" width="1" height="10" fill="#000"/><rect x="806" y="675" width="1" height="10" fill="#000"/><rect x="812" y="675" width="1" height="10" fill="#000"/><rect x="817" y="675" width="1" height="10" fill="#000"/><rect x="823" y="675" width="1" height="10" fill="#000"/><rect x="828" y="675" width="1" height="10" fill="#000"/><rect x="833" y="675" width="1" height="10" fill="#000"/><rect x="839" y="675" width="1" height="10" fill="#000"/><rect x="844" y="675" width="1" height="10" fill="#000"/><rect x="850" y="675" width="1" height="10" fill="#000"/><rect x="855" y="675" width="1" height="10" fill="#000"/><rect x="860" y="675" width="1" height="10" fill="#000"/><rect x="866" y="675" width="1" height="10" fill="#000"/><rect x="871" y="675" width="1" height="10" fill="#000"/><rect x="877" y="675" width="1" height="10" fill="#000"/><rect x="882" y="675" width="1" height="10" fill="#000"/><rect x="887" y="675" width="1" height="10" fill="#000"/><rect x="893" y="675" width="1" height="10" fill="#000"/><rect x="898" y="675" width="1" height="10" fill="#000"/><rect x="904" y="675" width="1" height="10" fill="#000"/><rect x="909" y="675" width="1" height="10" fill="#000"/><rect x="915" y="675" width="1" height="10" fill="#000"/><rect x="920" y="675" width="1" height="10" fill="#000"/><rect x="925" y="675" width="1" height="10" fill="#000"/><rect x="931" y="675" width="1" height="10" fill="#000"/>
</svg>
</body></html>
